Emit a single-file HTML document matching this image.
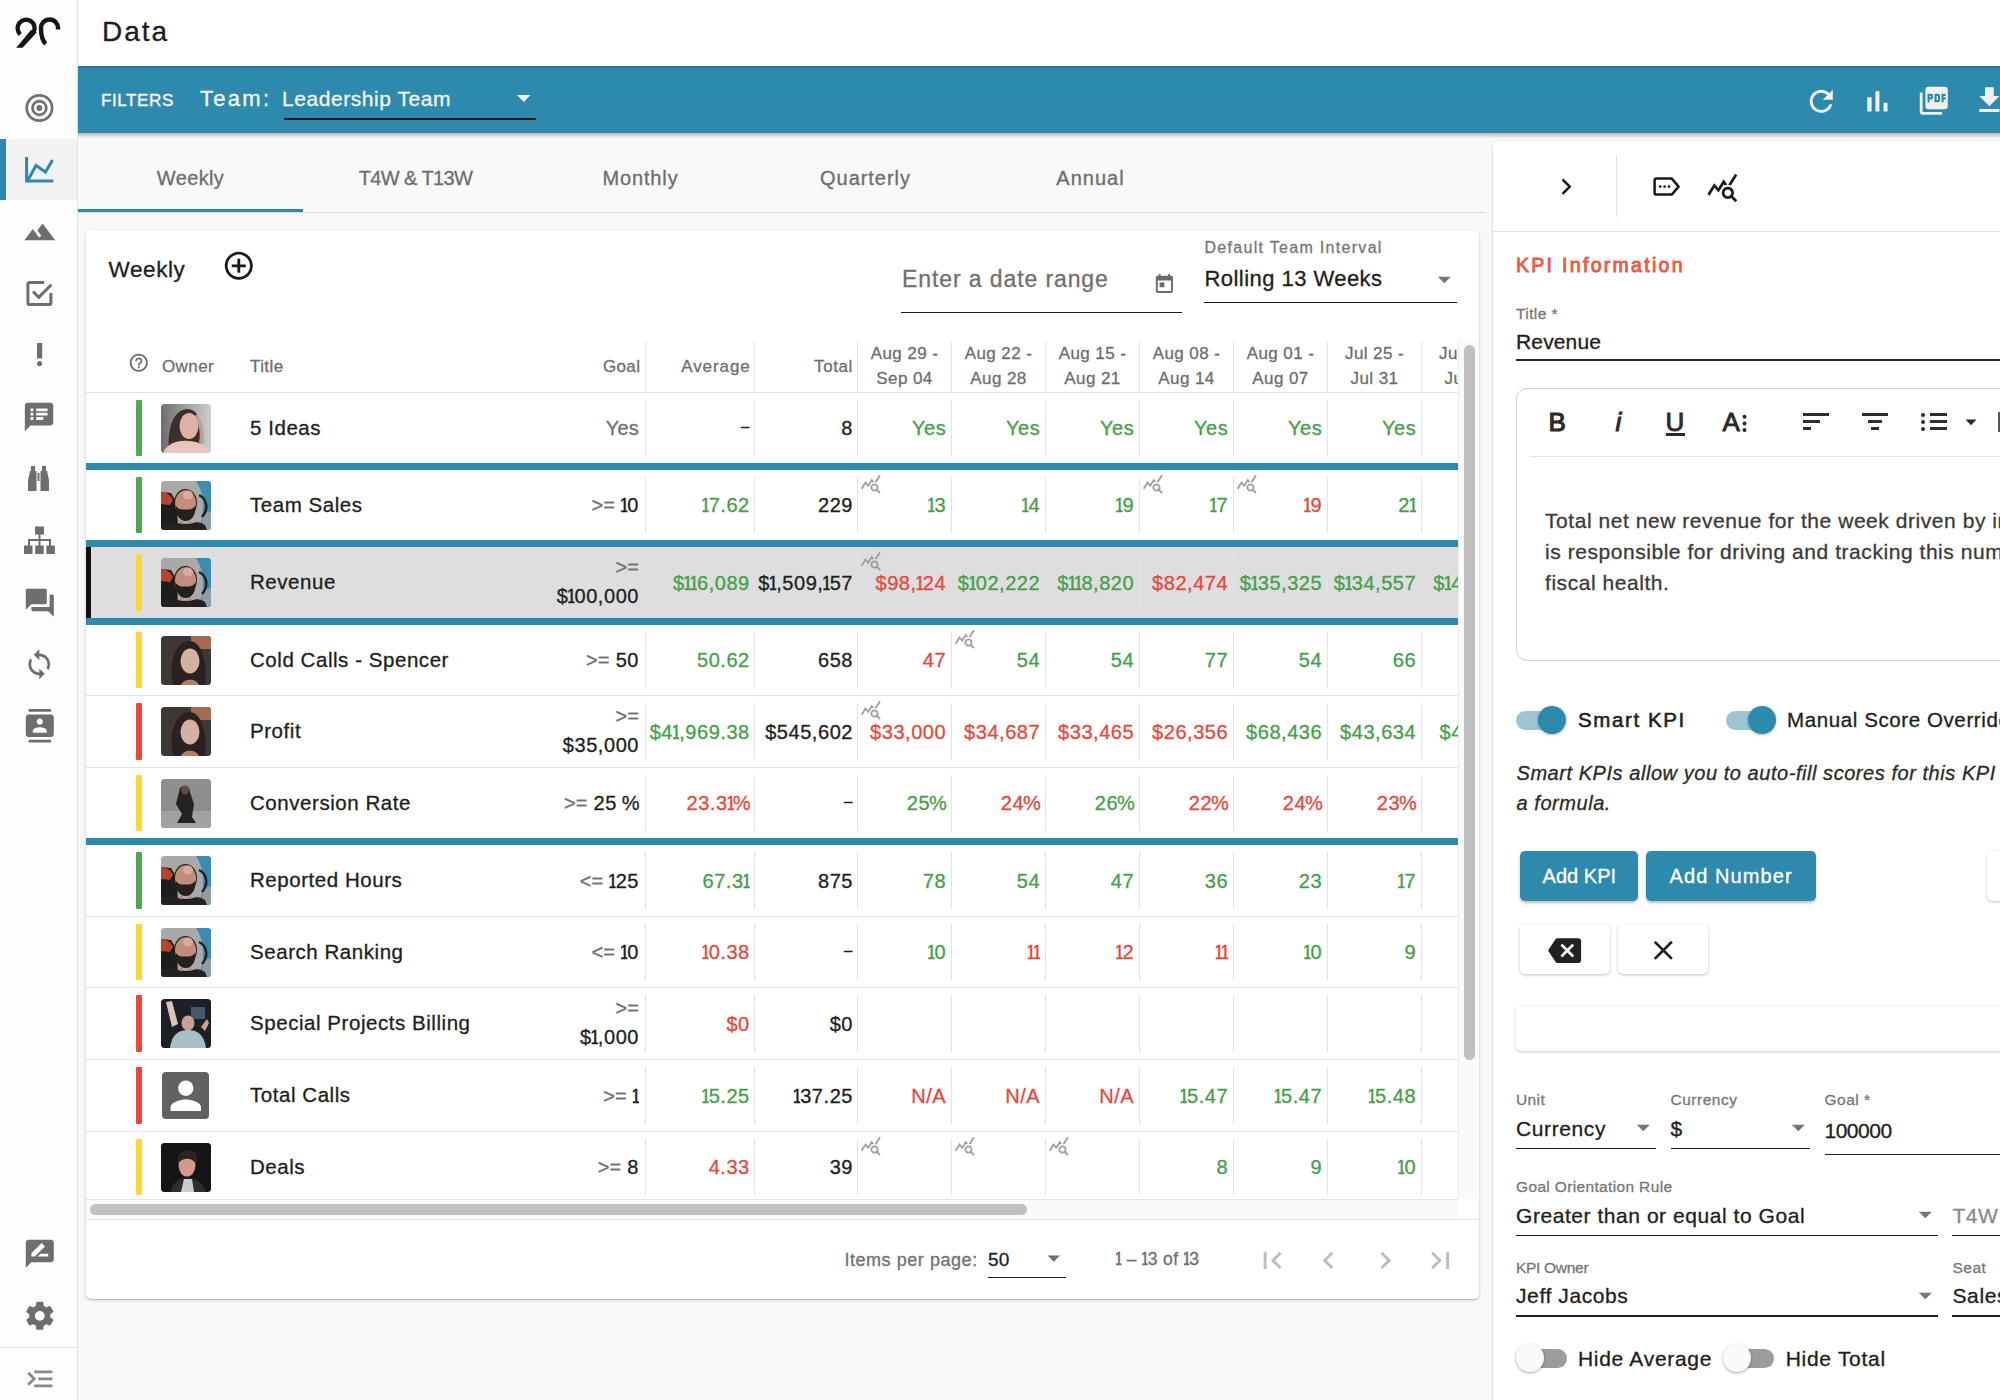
<!DOCTYPE html>
<html><head><meta charset="utf-8">
<style>
*{box-sizing:border-box}
html,body{margin:0;padding:0}
body{width:2000px;height:1400px;position:relative;overflow:hidden;font-family:"Liberation Sans",sans-serif;background:#f8f8f8;color:#212121}
.a{position:absolute}
svg.i{position:absolute;display:block;overflow:visible}
.t{position:absolute;white-space:nowrap;line-height:1;-webkit-text-stroke:0.3px currentColor}
.clip{position:absolute;overflow:hidden}
</style></head><body>
<div class="a" style="left:0px;top:0px;width:77px;height:1400px;background:#fdfdfd;"></div>
<div class="a" style="left:77px;top:0px;width:1px;height:1400px;background:#e2e2e2;"></div>
<svg class="i" style="left:0;top:0" width="78" height="66" viewBox="0 0 78 66"><g fill="none" stroke="#161616" stroke-width="4.4"><path d="M20.3 34.4 A8.5 8.5 0 1 1 33.8 31.8"/><path d="M45.8 43.8 C42 40.5 41 36 41 28 A8.5 8.5 0 0 1 58 28 L58 29.5"/></g><path d="M31.2 29.8 L36.7 32.4 L22.6 47.7 L16.2 47.7 Z" fill="#161616"/></svg>
<svg class="i" style="left:0;top:80" width="78" height="56" viewBox="0 80 78 56"><g fill="none" stroke="#707070" stroke-width="2.7"><circle cx="39.4" cy="108" r="12.7"/><circle cx="39.4" cy="108" r="6.9"/></g><circle cx="39.4" cy="108" r="2.9" fill="#707070"/></svg>
<div class="a" style="left:0px;top:139px;width:77px;height:61px;background:#f2f2f2;"></div>
<div class="a" style="left:0px;top:139px;width:6px;height:61px;background:#2e8aad;"></div>
<svg class="i" style="left:0;top:139px" width="78" height="61" viewBox="0 139 78 61"><g fill="none" stroke="#2e8aad" stroke-width="3"><path d="M26.6 157 V181.1 H53.3"/><path d="M28 180 L36 165.5 L45.5 172 L52.5 160"/></g></svg>
<svg class="i" style="left:22.60px;top:215.20px" width="33.60" height="33.60" viewBox="0 0 24 24"><path fill="#6e6e6e" d="M14 6l-3.75 5 2.85 3.8-1.6 1.2C9.81 13.75 7 10 7 10l-6 8h22L14 6z"/></svg>
<svg class="i" style="left:0;top:270px" width="78" height="50" viewBox="0 270 78 50"><g fill="none" stroke="#6e6e6e" stroke-width="3"><path d="M44 282.5 H29.5 Q27.9 282.5 27.9 284.1 V302.9 Q27.9 304.5 29.5 304.5 H49.3 Q50.9 304.5 50.9 302.9 V293"/><path d="M33 291.5 L38.8 297.3 L51.3 284.8"/></g></svg>
<svg class="i" style="left:23.80px;top:339.40px" width="31.20" height="31.20" viewBox="0 0 24 24"><path fill="#6e6e6e" d="M10 3h4v12h-4z M12 17a2 2 0 1 0 0.001 0z"/></svg>
<svg class="i" style="left:22.36px;top:399.96px" width="34.08" height="34.08" viewBox="0 0 24 24"><path fill="#6e6e6e" d="M20 2H4c-1.1 0-1.99.9-1.99 2L2 22l4-4h14c1.1 0 2-.9 2-2V4c0-1.1-.9-2-2-2zM8 14H6v-2h2v2zm0-3H6V9h2v2zm0-3H6V6h2v2zm7 6h-5v-2h5v2zm3-3h-8V9h8v2zm0-3h-8V6h8v2z"/></svg>
<svg class="i" style="left:0;top:460px" width="78" height="36" viewBox="0 460 78 36"><g fill="#6e6e6e"><rect x="31" y="466" width="4" height="5"/><rect x="42" y="466" width="4" height="5"/><path d="M30 471 H36.5 V491 H28 V480 Z"/><path d="M47 471 H40.5 V491 H49 V480 Z"/><rect x="37.5" y="473" width="2" height="8"/></g></svg>
<svg class="i" style="left:0;top:520px" width="78" height="40" viewBox="0 520 78 40"><g fill="#6e6e6e"><rect x="35" y="526.5" width="9" height="8"/><rect x="38.5" y="534" width="2" height="6"/><rect x="28" y="539" width="23" height="2"/><rect x="28" y="539" width="2" height="7"/><rect x="49" y="539" width="2" height="7"/><rect x="38.5" y="539" width="2" height="7"/><rect x="24" y="545.5" width="8.5" height="8.5"/><rect x="35.2" y="545.5" width="8.5" height="8.5"/><rect x="46.4" y="545.5" width="8.5" height="8.5"/></g></svg>
<svg class="i" style="left:22.60px;top:585.70px" width="33.60" height="33.60" viewBox="0 0 24 24"><path fill="#6e6e6e" d="M21 6h-2v9H6v2c0 .55.45 1 1 1h11l4 4V7c0-.55-.45-1-1-1zm-4 6V3c0-.55-.45-1-1-1H3c-.55 0-1 .45-1 1v14l4-4h10c.55 0 1-.45 1-1z"/></svg>
<svg class="i" style="left:23.08px;top:647.68px" width="32.64" height="32.64" viewBox="0 0 24 24"><path fill="#6e6e6e" d="M12 4V1L8 5l4 4V6c3.31 0 6 2.69 6 6 0 1.01-.25 1.97-.7 2.8l1.46 1.46C19.54 15.03 20 13.57 20 12c0-4.42-3.58-8-8-8zm0 14c-3.31 0-6-2.69-6-6 0-1.01.25-1.97.7-2.8L5.24 7.74C4.46 8.97 4 10.43 4 12c0 4.42 3.58 8 8 8v3l4-4-4-4v3z"/></svg>
<svg class="i" style="left:22.60px;top:709.20px" width="33.60" height="33.60" viewBox="0 0 24 24"><path fill="#6e6e6e" d="M20 0H4v2h16V0zM4 24h16v-2H4v2zM20 4H4c-1.1 0-2 .9-2 2v12c0 1.1.9 2 2 2h16c1.1 0 2-.9 2-2V6c0-1.1-.9-2-2-2zm-8 2.75c1.24 0 2.25 1.01 2.25 2.25s-1.01 2.25-2.25 2.25S9.75 10.24 9.75 9 10.76 6.75 12 6.75zM17 17H7v-1.5c0-1.67 3.33-2.5 5-2.5s5 .83 5 2.5V17z"/></svg>
<svg class="i" style="left:22.60px;top:1237.20px" width="33.60" height="33.60" viewBox="0 0 24 24"><path fill="#6e6e6e" d="M20 2H4c-1.1 0-1.99.9-1.99 2L2 22l4-4h14c1.1 0 2-.9 2-2V4c0-1.1-.9-2-2-2zM6 14v-2.47l6.88-6.88c.2-.2.51-.2.71 0l1.77 1.77c.2.2.2.51 0 .71L8.47 14H6zm12 0h-7.5l2-2H18v2z"/></svg>
<svg class="i" style="left:22.60px;top:1299.20px" width="33.60" height="33.60" viewBox="0 0 24 24"><path fill="#6e6e6e" d="M19.43 12.98c.04-.32.07-.64.07-.98s-.03-.66-.07-.98l2.11-1.65c.19-.15.24-.42.12-.64l-2-3.46c-.12-.22-.39-.3-.61-.22l-2.49 1c-.52-.4-1.08-.73-1.690-.98l-.38-2.65C14.46 2.18 14.25 2 14 2h-4c-.25 0-.46.18-.49.42l-.38 2.65c-.61.25-1.17.59-1.69.98l-2.49-1c-.23-.09-.49 0-.61.22l-2 3.46c-.13.22-.07.49.12.64l2.11 1.65c-.04.32-.07.65-.07.98s.03.66.07.98l-2.11 1.65c-.19.15-.24.42-.12.64l2 3.46c.12.22.39.3.61.22l2.49-1c.52.4 1.08.73 1.69.98l.38 2.65c.03.24.24.42.49.42h4c.25 0 .46-.18.49-.42l.38-2.65c.61-.25 1.17-.59 1.69-.98l2.49 1c.23.09.49 0 .61-.22l2-3.46c.12-.22.07-.49-.12-.64l-2.11-1.65zM12 15.5c-1.93 0-3.5-1.570-3.5-3.5s1.57-3.5 3.5-3.5 3.5 1.57 3.5 3.5-1.57 3.5-3.5 3.5z"/></svg>
<div class="a" style="left:0px;top:1347px;width:77px;height:1px;background:#e0e0e0;"></div>
<svg class="i" style="left:22.60px;top:1361.70px" width="33.60" height="33.60" viewBox="0 0 24 24"><path fill="#8a8a8a" transform="translate(24,0) scale(-1,1)" d="M3 18h13v-2H3v2zm0-5h10v-2H3v2zm0-7v2h13V6H3zm18 9.59L17.42 12 21 8.41 19.59 7l-5 5 5 5L21 15.59z"/></svg>
<div class="a" style="left:78px;top:0px;width:1922px;height:66px;background:#ffffff;"></div>
<div class="t" style="top:18.30px;font-size:28px;color:#1c1c1c;letter-spacing:2.0px;left:102px;">Data</div>
<div class="a" style="left:78px;top:66px;width:1922px;height:67px;background:#2e8aad"></div>
<div class="a" style="left:78px;top:66px;width:1922px;height:2px;background:#2a7696;"></div>
<div class="t" style="top:91.61px;font-size:17px;color:#f2f2f2;letter-spacing:0.6px;left:101px;-webkit-text-stroke:0.45px #f2f2f2;">FILTERS</div>
<div class="t" style="top:87.88px;font-size:22px;color:#f4f4f4;letter-spacing:2.3px;left:200px;">Team:</div>
<div class="t" style="top:88.22px;font-size:21px;color:#f4f4f4;letter-spacing:0.55px;left:282px;">Leadership Team</div>
<div class="a" style="left:283.5px;top:118px;width:252.5px;height:1.5px;background:#111;"></div>
<svg class="i" style="left:516px;top:94px" width="16" height="9" viewBox="0 0 16 9"><path d="M1 1 H14.5 L7.75 8 Z" fill="#f4f4f4"/></svg>
<svg class="i" style="left:1804.22px;top:83.72px" width="34.56" height="34.56" viewBox="0 0 24 24"><path fill="#f0f0f0" d="M17.65 6.35C16.2 4.9 14.21 4 12 4c-4.42 0-7.99 3.58-7.99 8s3.57 8 7.99 8c3.73 0 6.84-2.55 7.730-6h-2.08c-.82 2.33-3.04 4-5.65 4-3.31 0-6-2.69-6-6s2.69-6 6-6c1.66 0 3.14.69 4.22 1.78L13 11h7V4l-2.35 2.35z"/></svg>
<svg class="i" style="left:1860.30px;top:83.60px" width="34.80" height="34.80" viewBox="0 0 24 24"><path fill="#f0f0f0" d="M5 9.2h3V19H5zM10.6 5h2.8v14h-2.8zm5.6 8H19v6h-2.8z"/></svg>
<svg class="i" style="left:1917.00px;top:84.20px" width="33.60" height="33.60" viewBox="0 0 24 24"><path fill="#f0f0f0" d="M20 2H8c-1.1 0-2 .9-2 2v12c0 1.1.9 2 2 2h12c1.1 0 2-.9 2-2V4c0-1.1-.9-2-2-2zm-8.5 7.5c0 .83-.67 1.5-1.5 1.5H9v2H7.5V7H10c.83 0 1.5.67 1.5 1.5v1zm5 2c0 .83-.67 1.5-1.5 1.5h-2.5V7H15c.83 0 1.5.67 1.5 1.5v3zm4-3H19v1h1.5V11H19v2h-1.5V7h3v1.5zM9 9.5h1v-1H9v1zM4 6H2v14c0 1.1.9 2 2 2h14v-2H4V6zm10 5.5h1v-3h-1v3z"/></svg>
<svg class="i" style="left:1972.10px;top:83.10px" width="34.80" height="34.80" viewBox="0 0 24 24"><path fill="#f0f0f0" d="M19 9h-4V3H9v6H5l7 7 7-7zM5 18v2h14v-2H5z"/></svg>
<div class="a" style="left:78px;top:133px;width:1415px;height:79px;background:#f9f9f9;"></div>
<div class="a" style="left:78px;top:212px;width:1408px;height:1px;background:#dcdcdc;"></div>
<div class="t" style="top:168.07px;font-size:20px;color:#6d6d6d;letter-spacing:0.35px;left:-109.5px;width:600px;text-align:center;">Weekly</div>
<div class="t" style="top:168.07px;font-size:20px;color:#6d6d6d;letter-spacing:-0.6px;left:115.5px;width:600px;text-align:center;">T4W &amp; T13W</div>
<div class="t" style="top:168.07px;font-size:20px;color:#6d6d6d;letter-spacing:0.85px;left:340.5px;width:600px;text-align:center;">Monthly</div>
<div class="t" style="top:168.07px;font-size:20px;color:#6d6d6d;letter-spacing:0.95px;left:565.5px;width:600px;text-align:center;">Quarterly</div>
<div class="t" style="top:168.07px;font-size:20px;color:#6d6d6d;letter-spacing:1.0px;left:790.5px;width:600px;text-align:center;">Annual</div>
<div class="a" style="left:78px;top:208.5px;width:225px;height:3px;background:#2e8aad;"></div>
<div class="a" style="left:78px;top:133px;width:1922px;height:5px;background:linear-gradient(rgba(0,0,0,.26),rgba(0,0,0,.02));"></div>
<div class="a" style="left:86px;top:230px;width:1393px;height:1069px;background:#fff;border-radius:5px;box-shadow:0 1px 3px rgba(0,0,0,.2),0 1px 1px rgba(0,0,0,.12)"></div>
<div class="t" style="top:258.75px;font-size:22.5px;color:#1e1e1e;letter-spacing:0.6px;left:108.5px;">Weekly</div>
<svg class="i" style="left:221.70px;top:248.70px" width="33.60" height="33.60" viewBox="0 0 24 24"><path fill="#1a1a1a" d="M13 7h-2v4H7v2h4v4h2v-4h4v-2h-4V7zm-1-5C6.48 2 2 6.48 2 12s4.48 10 10 10 10-4.48 10-10S17.52 2 12 2zm0 18c-4.41 0-8-3.59-8-8s3.59-8 8-8 8 3.59 8 8-3.59 8-8 8z"/></svg>
<div class="t" style="top:268.03px;font-size:23px;color:#707070;letter-spacing:0.9px;left:902px;">Enter a date range</div>
<svg class="i" style="left:1153.10px;top:272.60px" width="22.80" height="22.80" viewBox="0 0 24 24"><path fill="#6a6a6a" d="M19 3h-1V1h-2v2H8V1H6v2H5c-1.11 0-1.99.9-1.99 2L3 19c0 1.1.89 2 2 2h14c1.1 0 2-.9 2-2V5c0-1.1-.9-2-2-2zm0 16H5V8h14v11zM7 10h5v5H7z"/></svg>
<div class="a" style="left:901px;top:311.5px;width:281px;height:1.5px;background:#1a1a1a;"></div>
<div class="t" style="top:239.66px;font-size:16px;color:#777777;letter-spacing:1.3px;left:1204.5px;">Default Team Interval</div>
<div class="t" style="top:268.38px;font-size:22px;color:#1e1e1e;letter-spacing:0.45px;left:1204.5px;">Rolling 13 Weeks</div>
<svg class="i" style="left:1437px;top:276px" width="15" height="8" viewBox="0 0 15 8"><path d="M0.8 0.8 H13.8 L7.3 7.3 Z" fill="#757575"/></svg>
<div class="a" style="left:1204px;top:301.5px;width:253px;height:1.5px;background:#1a1a1a;"></div>
<div class="clip" style="left:86px;top:340px;width:1372px;height:859px"><div class="a" style="left:-86px;top:-340px;width:2000px;height:1400px">
<div class="t" style="top:357.61px;font-size:17px;color:#6e6e6e;letter-spacing:0.4px;left:162px;">Owner</div>
<div class="t" style="top:357.61px;font-size:17px;color:#6e6e6e;letter-spacing:0.4px;left:250px;">Title</div>
<div class="t" style="top:357.61px;font-size:17px;color:#6e6e6e;letter-spacing:0.4px;left:40.39999999999998px;width:600px;text-align:right;">Goal</div>
<div class="t" style="top:357.61px;font-size:17px;color:#6e6e6e;letter-spacing:0.9px;left:150.60000000000002px;width:600px;text-align:right;">Average</div>
<div class="t" style="top:357.61px;font-size:17px;color:#6e6e6e;letter-spacing:0.6px;left:253px;width:600px;text-align:right;">Total</div>
<svg class="i" style="left:128.20px;top:352.20px" width="21.60" height="21.60" viewBox="0 0 24 24"><path fill="#6a6a6a" d="M11 18h2v-2h-2v2zm1-16C6.48 2 2 6.48 2 12s4.48 10 10 10 10-4.480 10-10S17.52 2 12 2zm0 18c-4.41 0-8-3.59-8-8s3.59-8 8-8 8 3.59 8 8-3.59 8-8 8zm0-14c-2.21 0-4 1.79-4 4h2c0-1.1.9-2 2-2s2 .9 2 2c0 2-3 1.75-3 5h2c0-2.25 3-2.5 3-5 0-2.21-1.79-4-4-4z"/></svg>
<div class="t" style="top:344.91px;font-size:17px;color:#6e6e6e;letter-spacing:0.4px;left:604.5px;width:600px;text-align:center;">Aug 29 -</div>
<div class="t" style="top:370.01px;font-size:17px;color:#6e6e6e;letter-spacing:0.4px;left:604.5px;width:600px;text-align:center;">Sep 04</div>
<div class="t" style="top:344.91px;font-size:17px;color:#6e6e6e;letter-spacing:0.4px;left:698.5px;width:600px;text-align:center;">Aug 22 -</div>
<div class="t" style="top:370.01px;font-size:17px;color:#6e6e6e;letter-spacing:0.4px;left:698.5px;width:600px;text-align:center;">Aug 28</div>
<div class="t" style="top:344.91px;font-size:17px;color:#6e6e6e;letter-spacing:0.4px;left:792.5px;width:600px;text-align:center;">Aug 15 -</div>
<div class="t" style="top:370.01px;font-size:17px;color:#6e6e6e;letter-spacing:0.4px;left:792.5px;width:600px;text-align:center;">Aug 21</div>
<div class="t" style="top:344.91px;font-size:17px;color:#6e6e6e;letter-spacing:0.4px;left:886.5px;width:600px;text-align:center;">Aug 08 -</div>
<div class="t" style="top:370.01px;font-size:17px;color:#6e6e6e;letter-spacing:0.4px;left:886.5px;width:600px;text-align:center;">Aug 14</div>
<div class="t" style="top:344.91px;font-size:17px;color:#6e6e6e;letter-spacing:0.4px;left:980.5px;width:600px;text-align:center;">Aug 01 -</div>
<div class="t" style="top:370.01px;font-size:17px;color:#6e6e6e;letter-spacing:0.4px;left:980.5px;width:600px;text-align:center;">Aug 07</div>
<div class="t" style="top:344.91px;font-size:17px;color:#6e6e6e;letter-spacing:0.4px;left:1074.5px;width:600px;text-align:center;">Jul 25 -</div>
<div class="t" style="top:370.01px;font-size:17px;color:#6e6e6e;letter-spacing:0.4px;left:1074.5px;width:600px;text-align:center;">Jul 31</div>
<div class="t" style="top:344.91px;font-size:17px;color:#6e6e6e;letter-spacing:0.4px;left:1168.5px;width:600px;text-align:center;">Jul 18 -</div>
<div class="t" style="top:370.01px;font-size:17px;color:#6e6e6e;letter-spacing:0.4px;left:1168.5px;width:600px;text-align:center;">Jul 24</div>
<div class="a" style="left:644.5px;top:341.5px;width:1px;height:51px;background:#e3e3e3;"></div>
<div class="a" style="left:754px;top:341.5px;width:1px;height:51px;background:#e3e3e3;"></div>
<div class="a" style="left:857px;top:341.5px;width:1px;height:51px;background:#e3e3e3;"></div>
<div class="a" style="left:951px;top:341.5px;width:1px;height:51px;background:#e3e3e3;"></div>
<div class="a" style="left:1045px;top:341.5px;width:1px;height:51px;background:#e3e3e3;"></div>
<div class="a" style="left:1139px;top:341.5px;width:1px;height:51px;background:#e3e3e3;"></div>
<div class="a" style="left:1233px;top:341.5px;width:1px;height:51px;background:#e3e3e3;"></div>
<div class="a" style="left:1327px;top:341.5px;width:1px;height:51px;background:#e3e3e3;"></div>
<div class="a" style="left:1421px;top:341.5px;width:1px;height:51px;background:#e3e3e3;"></div>
<div class="a" style="left:86px;top:392px;width:1372px;height:1px;background:#e0e0e0;"></div>
<div class="a" style="left:136px;top:400px;width:6px;height:56px;background:#4caa50;border-radius:1px"></div>
<svg class="i" style="left:161px;top:404px;border-radius:4px" width="50" height="49" viewBox="0 0 50 49"><clipPath id="c161404"><rect width="50" height="49" rx="3.5"/></clipPath><g clip-path="url(#c161404)"><defs><linearGradient id="gw1" x1="0" x2="1"><stop offset="0" stop-color="#6e6e6e"/><stop offset="1" stop-color="#cfcfcf"/></linearGradient></defs><rect width="50" height="49" fill="url(#gw1)"/><path d="M8 49 C6 30 10 6 26 5 C36 5 40 14 40 30 L36 49Z" fill="#3b302c"/><ellipse cx="28" cy="22" rx="9.5" ry="13" fill="#dcb2a4"/><path d="M2 49 C6 40 16 36 27 37 C38 37 46 42 49 49Z" fill="#e9c6bb"/><path d="M36 10 C42 18 44 30 42 40 L38 40 C40 30 38 20 34 12Z" fill="#b9a090"/></g></svg>
<div class="t" style="top:417.75px;font-size:20.5px;color:#1e1e1e;letter-spacing:0.55px;left:250px;">5 Ideas</div>
<div class="a" style="left:644.5px;top:400px;width:1px;height:56px;background:#e3e3e3;"></div>
<div class="a" style="left:754px;top:400px;width:1px;height:56px;background:#e3e3e3;"></div>
<div class="a" style="left:857px;top:400px;width:1px;height:56px;background:#e3e3e3;"></div>
<div class="a" style="left:951px;top:400px;width:1px;height:56px;background:#e3e3e3;"></div>
<div class="a" style="left:1045px;top:400px;width:1px;height:56px;background:#e3e3e3;"></div>
<div class="a" style="left:1139px;top:400px;width:1px;height:56px;background:#e3e3e3;"></div>
<div class="a" style="left:1233px;top:400px;width:1px;height:56px;background:#e3e3e3;"></div>
<div class="a" style="left:1327px;top:400px;width:1px;height:56px;background:#e3e3e3;"></div>
<div class="a" style="left:1421px;top:400px;width:1px;height:56px;background:#e3e3e3;"></div>
<div class="t" style="top:418.17px;font-size:20px;color:#707070;letter-spacing:0.2px;left:39px;width:600px;text-align:right;">Yes</div>
<div class="t" style="top:418.30px;font-size:15px;color:#212121;letter-spacing:0.55px;left:149.79999999999995px;width:600px;text-align:right;">&ndash;</div>
<div class="t" style="top:418.17px;font-size:20px;color:#1e1e1e;letter-spacing:0.55px;left:253px;width:600px;text-align:right;">8</div>
<div class="t" style="top:418.17px;font-size:20px;color:#45a04a;letter-spacing:0.55px;left:346.20000000000005px;width:600px;text-align:right;">Yes</div>
<div class="t" style="top:418.17px;font-size:20px;color:#45a04a;letter-spacing:0.55px;left:440.20000000000005px;width:600px;text-align:right;">Yes</div>
<div class="t" style="top:418.17px;font-size:20px;color:#45a04a;letter-spacing:0.55px;left:534.2px;width:600px;text-align:right;">Yes</div>
<div class="t" style="top:418.17px;font-size:20px;color:#45a04a;letter-spacing:0.55px;left:628.2px;width:600px;text-align:right;">Yes</div>
<div class="t" style="top:418.17px;font-size:20px;color:#45a04a;letter-spacing:0.55px;left:722.2px;width:600px;text-align:right;">Yes</div>
<div class="t" style="top:418.17px;font-size:20px;color:#45a04a;letter-spacing:0.55px;left:816.2px;width:600px;text-align:right;">Yes</div>
<div class="a" style="left:86px;top:463px;width:1372px;height:7px;background:#2e8aad;"></div>
<div class="a" style="left:136px;top:477px;width:6px;height:56px;background:#4caa50;border-radius:1px"></div>
<svg class="i" style="left:161px;top:481px;border-radius:4px" width="50" height="49" viewBox="0 0 50 49"><clipPath id="c161481"><rect width="50" height="49" rx="3.5"/></clipPath><g clip-path="url(#c161481)"><rect width="50" height="49" fill="#a9a9a9"/><path d="M0 11 L10 12 L16 22 L17 49 L0 49Z" fill="#1d1d1d"/><path d="M0 11 C5 11 10 14 12 19 L9 24 L0 23Z" fill="#b8432e"/><path d="M35 0 L50 0 L50 49 L38 49 C44 30 44 14 35 0Z" fill="#3a8db0"/><path d="M50 30 L50 49 L40 49 L42 32Z" fill="#8d9ea6"/><path d="M38 14 C46 18 48 28 41 36" stroke="#1e1e1e" stroke-width="2.4" fill="none"/><ellipse cx="24.5" cy="22" rx="11.5" ry="14" fill="#2a2424"/><ellipse cx="24.5" cy="22.5" rx="10.5" ry="13.2" fill="#c38d7b"/><ellipse cx="27" cy="14" rx="5" ry="4.5" fill="#d8ab9c"/><path d="M14.5 24 C14 34 19 40 24.5 40 C31 40 35 34 34.5 24 C32 29 28 28.5 24.5 28.5 C21 28.5 17 29 14.5 24Z" fill="#252020"/><path d="M19 38 C20 44 29 44 30 38 L30 44 L19 44Z" fill="#b47f6c"/><path d="M0 49 L0 42 C10 40 16 41 20 43 L29 43 C36 40 40 41 44 44 L46 49Z" fill="#222"/></g></svg>
<div class="t" style="top:494.75px;font-size:20.5px;color:#1e1e1e;letter-spacing:0.55px;left:250px;">Team Sales</div>
<div class="a" style="left:644.5px;top:477px;width:1px;height:56px;background:#e3e3e3;"></div>
<div class="a" style="left:754px;top:477px;width:1px;height:56px;background:#e3e3e3;"></div>
<div class="a" style="left:857px;top:477px;width:1px;height:56px;background:#e3e3e3;"></div>
<div class="a" style="left:951px;top:477px;width:1px;height:56px;background:#e3e3e3;"></div>
<div class="a" style="left:1045px;top:477px;width:1px;height:56px;background:#e3e3e3;"></div>
<div class="a" style="left:1139px;top:477px;width:1px;height:56px;background:#e3e3e3;"></div>
<div class="a" style="left:1233px;top:477px;width:1px;height:56px;background:#e3e3e3;"></div>
<div class="a" style="left:1327px;top:477px;width:1px;height:56px;background:#e3e3e3;"></div>
<div class="a" style="left:1421px;top:477px;width:1px;height:56px;background:#e3e3e3;"></div>
<div class="t" style="top:495.17px;font-size:20px;color:#1e1e1e;letter-spacing:0.55px;left:39px;width:600px;text-align:right;"><span style="color:#707070;letter-spacing:0.1px">&gt;=</span> <span style="clip-path:inset(0 3.0px 0 2.5px);margin-left:-2.5px;margin-right:-3.0px">1</span>0</div>
<div class="t" style="top:495.17px;font-size:20px;color:#45a04a;letter-spacing:0.55px;left:149.79999999999995px;width:600px;text-align:right;"><span style="clip-path:inset(0 3.0px 0 2.5px);margin-left:-2.5px;margin-right:-3.0px">1</span>7.62</div>
<div class="t" style="top:495.17px;font-size:20px;color:#1e1e1e;letter-spacing:0.55px;left:253px;width:600px;text-align:right;">229</div>
<div class="t" style="top:495.17px;font-size:20px;color:#45a04a;letter-spacing:0.55px;left:346.20000000000005px;width:600px;text-align:right;"><span style="clip-path:inset(0 3.0px 0 2.5px);margin-left:-2.5px;margin-right:-3.0px">1</span>3</div>
<svg class="i" style="left:859.60px;top:472.60px" width="21.6" height="21.6" viewBox="0 0 24 24"><path fill="#9e9e9e" d="M19.88 18.47c.44-.7.7-1.51.7-2.39 0-2.49-2.01-4.5-4.5-4.5s-4.5 2.01-4.5 4.5 2.01 4.5 4.49 4.5c.88 0 1.7-.26 2.39-.7L21.58 23 23 21.58l-3.12-3.11zm-3.8.11c-1.38 0-2.5-1.12-2.5-2.5s1.12-2.5 2.5-2.5 2.5 1.12 2.5 2.5-1.12 2.5-2.5 2.5zm-.36-8.5c-.74.02-1.450.18-2.1.45l-.55-.83-3.8 6.18-3.01-3.52-3.63 5.81L1 17l5-8 3 3.5L13 6l2.72 4.080zm2.59.5c-.64-.28-1.33-.45-2.05-.49L21.38 2 23 3.18l-4.69 7.4z"/></svg>
<div class="t" style="top:495.17px;font-size:20px;color:#45a04a;letter-spacing:0.55px;left:440.20000000000005px;width:600px;text-align:right;"><span style="clip-path:inset(0 3.0px 0 2.5px);margin-left:-2.5px;margin-right:-3.0px">1</span>4</div>
<div class="t" style="top:495.17px;font-size:20px;color:#45a04a;letter-spacing:0.55px;left:534.2px;width:600px;text-align:right;"><span style="clip-path:inset(0 3.0px 0 2.5px);margin-left:-2.5px;margin-right:-3.0px">1</span>9</div>
<div class="t" style="top:495.17px;font-size:20px;color:#45a04a;letter-spacing:0.55px;left:628.2px;width:600px;text-align:right;"><span style="clip-path:inset(0 3.0px 0 2.5px);margin-left:-2.5px;margin-right:-3.0px">1</span>7</div>
<svg class="i" style="left:1141.60px;top:472.60px" width="21.6" height="21.6" viewBox="0 0 24 24"><path fill="#9e9e9e" d="M19.88 18.47c.44-.7.7-1.51.7-2.39 0-2.49-2.01-4.5-4.5-4.5s-4.5 2.01-4.5 4.5 2.01 4.5 4.49 4.5c.88 0 1.7-.26 2.39-.7L21.58 23 23 21.58l-3.12-3.11zm-3.8.11c-1.38 0-2.5-1.12-2.5-2.5s1.12-2.5 2.5-2.5 2.5 1.12 2.5 2.5-1.12 2.5-2.5 2.5zm-.36-8.5c-.74.02-1.450.18-2.1.45l-.55-.83-3.8 6.18-3.01-3.52-3.63 5.81L1 17l5-8 3 3.5L13 6l2.72 4.080zm2.59.5c-.64-.28-1.33-.45-2.05-.49L21.38 2 23 3.18l-4.69 7.4z"/></svg>
<div class="t" style="top:495.17px;font-size:20px;color:#e9473a;letter-spacing:0.55px;left:722.2px;width:600px;text-align:right;"><span style="clip-path:inset(0 3.0px 0 2.5px);margin-left:-2.5px;margin-right:-3.0px">1</span>9</div>
<svg class="i" style="left:1235.60px;top:472.60px" width="21.6" height="21.6" viewBox="0 0 24 24"><path fill="#9e9e9e" d="M19.88 18.47c.44-.7.7-1.51.7-2.39 0-2.49-2.01-4.5-4.5-4.5s-4.5 2.01-4.5 4.5 2.01 4.5 4.49 4.5c.88 0 1.7-.26 2.39-.7L21.58 23 23 21.58l-3.12-3.11zm-3.8.11c-1.38 0-2.5-1.12-2.5-2.5s1.12-2.5 2.5-2.5 2.5 1.12 2.5 2.5-1.12 2.5-2.5 2.5zm-.36-8.5c-.74.02-1.450.18-2.1.45l-.55-.83-3.8 6.18-3.01-3.52-3.63 5.81L1 17l5-8 3 3.5L13 6l2.72 4.080zm2.59.5c-.64-.28-1.33-.45-2.05-.49L21.38 2 23 3.18l-4.69 7.4z"/></svg>
<div class="t" style="top:495.17px;font-size:20px;color:#45a04a;letter-spacing:0.55px;left:816.2px;width:600px;text-align:right;">2<span style="clip-path:inset(0 3.0px 0 2.5px);margin-left:-2.5px;margin-right:-3.0px">1</span></div>
<div class="a" style="left:86px;top:540px;width:1372px;height:7px;background:#2e8aad;"></div>
<div class="a" style="left:86px;top:547px;width:1372px;height:71px;background:#dedede;"></div>
<div class="a" style="left:86px;top:547px;width:5px;height:71px;background:#111111;"></div>
<div class="a" style="left:136px;top:554px;width:6px;height:57px;background:#fdd835;border-radius:1px"></div>
<svg class="i" style="left:161px;top:558px;border-radius:4px" width="50" height="49" viewBox="0 0 50 49"><clipPath id="c161558"><rect width="50" height="49" rx="3.5"/></clipPath><g clip-path="url(#c161558)"><rect width="50" height="49" fill="#a9a9a9"/><path d="M0 11 L10 12 L16 22 L17 49 L0 49Z" fill="#1d1d1d"/><path d="M0 11 C5 11 10 14 12 19 L9 24 L0 23Z" fill="#b8432e"/><path d="M35 0 L50 0 L50 49 L38 49 C44 30 44 14 35 0Z" fill="#3a8db0"/><path d="M50 30 L50 49 L40 49 L42 32Z" fill="#8d9ea6"/><path d="M38 14 C46 18 48 28 41 36" stroke="#1e1e1e" stroke-width="2.4" fill="none"/><ellipse cx="24.5" cy="22" rx="11.5" ry="14" fill="#2a2424"/><ellipse cx="24.5" cy="22.5" rx="10.5" ry="13.2" fill="#c38d7b"/><ellipse cx="27" cy="14" rx="5" ry="4.5" fill="#d8ab9c"/><path d="M14.5 24 C14 34 19 40 24.5 40 C31 40 35 34 34.5 24 C32 29 28 28.5 24.5 28.5 C21 28.5 17 29 14.5 24Z" fill="#252020"/><path d="M19 38 C20 44 29 44 30 38 L30 44 L19 44Z" fill="#b47f6c"/><path d="M0 49 L0 42 C10 40 16 41 20 43 L29 43 C36 40 40 41 44 44 L46 49Z" fill="#222"/></g></svg>
<div class="t" style="top:572.25px;font-size:20.5px;color:#1e1e1e;letter-spacing:0.55px;left:250px;">Revenue</div>
<div class="a" style="left:644.5px;top:554px;width:1px;height:57px;background:#e3e3e3;"></div>
<div class="a" style="left:754px;top:554px;width:1px;height:57px;background:#e3e3e3;"></div>
<div class="a" style="left:857px;top:554px;width:1px;height:57px;background:#e3e3e3;"></div>
<div class="a" style="left:951px;top:554px;width:1px;height:57px;background:#e3e3e3;"></div>
<div class="a" style="left:1045px;top:554px;width:1px;height:57px;background:#e3e3e3;"></div>
<div class="a" style="left:1139px;top:554px;width:1px;height:57px;background:#e3e3e3;"></div>
<div class="a" style="left:1233px;top:554px;width:1px;height:57px;background:#e3e3e3;"></div>
<div class="a" style="left:1327px;top:554px;width:1px;height:57px;background:#e3e3e3;"></div>
<div class="a" style="left:1421px;top:554px;width:1px;height:57px;background:#e3e3e3;"></div>
<div class="t" style="top:557.07px;font-size:20px;color:#707070;letter-spacing:0.1px;left:39px;width:600px;text-align:right;">&gt;=</div>
<div class="t" style="top:586.37px;font-size:20px;color:#1e1e1e;letter-spacing:0.55px;left:39px;width:600px;text-align:right;">$<span style="clip-path:inset(0 3.0px 0 2.5px);margin-left:-2.5px;margin-right:-3.0px">1</span>00,000</div>
<div class="t" style="top:572.67px;font-size:20px;color:#45a04a;letter-spacing:0.55px;left:149.79999999999995px;width:600px;text-align:right;">$<span style="clip-path:inset(0 3.0px 0 2.5px);margin-left:-2.5px;margin-right:-3.0px">1</span><span style="clip-path:inset(0 3.0px 0 2.5px);margin-left:-2.5px;margin-right:-3.0px">1</span>6,089</div>
<div class="t" style="top:572.67px;font-size:20px;color:#1e1e1e;letter-spacing:0.55px;left:253px;width:600px;text-align:right;">$<span style="clip-path:inset(0 3.0px 0 2.5px);margin-left:-2.5px;margin-right:-3.0px">1</span>,509,<span style="clip-path:inset(0 3.0px 0 2.5px);margin-left:-2.5px;margin-right:-3.0px">1</span>57</div>
<div class="t" style="top:572.67px;font-size:20px;color:#e9473a;letter-spacing:0.55px;left:346.20000000000005px;width:600px;text-align:right;">$98,<span style="clip-path:inset(0 3.0px 0 2.5px);margin-left:-2.5px;margin-right:-3.0px">1</span>24</div>
<svg class="i" style="left:859.60px;top:549.60px" width="21.6" height="21.6" viewBox="0 0 24 24"><path fill="#9e9e9e" d="M19.88 18.47c.44-.7.7-1.51.7-2.39 0-2.49-2.01-4.5-4.5-4.5s-4.5 2.01-4.5 4.5 2.01 4.5 4.49 4.5c.88 0 1.7-.26 2.39-.7L21.58 23 23 21.58l-3.12-3.11zm-3.8.11c-1.38 0-2.5-1.12-2.5-2.5s1.12-2.5 2.5-2.5 2.5 1.12 2.5 2.5-1.12 2.5-2.5 2.5zm-.36-8.5c-.74.02-1.450.18-2.1.45l-.55-.83-3.8 6.18-3.01-3.52-3.63 5.81L1 17l5-8 3 3.5L13 6l2.72 4.080zm2.59.5c-.64-.28-1.33-.45-2.05-.49L21.38 2 23 3.18l-4.69 7.4z"/></svg>
<div class="t" style="top:572.67px;font-size:20px;color:#45a04a;letter-spacing:0.55px;left:440.20000000000005px;width:600px;text-align:right;">$<span style="clip-path:inset(0 3.0px 0 2.5px);margin-left:-2.5px;margin-right:-3.0px">1</span>02,222</div>
<div class="t" style="top:572.67px;font-size:20px;color:#45a04a;letter-spacing:0.55px;left:534.2px;width:600px;text-align:right;">$<span style="clip-path:inset(0 3.0px 0 2.5px);margin-left:-2.5px;margin-right:-3.0px">1</span><span style="clip-path:inset(0 3.0px 0 2.5px);margin-left:-2.5px;margin-right:-3.0px">1</span>8,820</div>
<div class="t" style="top:572.67px;font-size:20px;color:#e9473a;letter-spacing:0.55px;left:628.2px;width:600px;text-align:right;">$82,474</div>
<div class="t" style="top:572.67px;font-size:20px;color:#45a04a;letter-spacing:0.55px;left:722.2px;width:600px;text-align:right;">$<span style="clip-path:inset(0 3.0px 0 2.5px);margin-left:-2.5px;margin-right:-3.0px">1</span>35,325</div>
<div class="t" style="top:572.67px;font-size:20px;color:#45a04a;letter-spacing:0.55px;left:816.2px;width:600px;text-align:right;">$<span style="clip-path:inset(0 3.0px 0 2.5px);margin-left:-2.5px;margin-right:-3.0px">1</span>34,557</div>
<div class="t" style="top:572.67px;font-size:20px;color:#45a04a;letter-spacing:0.55px;left:910.2px;width:600px;text-align:right;">$<span style="clip-path:inset(0 3.0px 0 2.5px);margin-left:-2.5px;margin-right:-3.0px">1</span>48,4<span style="clip-path:inset(0 3.0px 0 2.5px);margin-left:-2.5px;margin-right:-3.0px">1</span>0</div>
<div class="a" style="left:86px;top:618px;width:1372px;height:7px;background:#2e8aad;"></div>
<div class="a" style="left:136px;top:632px;width:6px;height:56px;background:#fdd835;border-radius:1px"></div>
<svg class="i" style="left:161px;top:636px;border-radius:4px" width="50" height="49" viewBox="0 0 50 49"><clipPath id="c161636"><rect width="50" height="49" rx="3.5"/></clipPath><g clip-path="url(#c161636)"><rect width="50" height="49" fill="#3e3735"/><rect x="30" width="20" height="13" fill="#a46b52"/><path d="M12 49 C8 32 12 6 28 5 C42 5 46 28 44 49Z" fill="#2a2220"/><ellipse cx="29" cy="25" rx="9.5" ry="12.5" fill="#d8b0a2"/><path d="M20 49 C23 42 35 42 38 49Z" fill="#b47e66"/></g></svg>
<div class="t" style="top:649.75px;font-size:20.5px;color:#1e1e1e;letter-spacing:0.55px;left:250px;">Cold Calls - Spencer</div>
<div class="a" style="left:644.5px;top:632px;width:1px;height:56px;background:#e3e3e3;"></div>
<div class="a" style="left:754px;top:632px;width:1px;height:56px;background:#e3e3e3;"></div>
<div class="a" style="left:857px;top:632px;width:1px;height:56px;background:#e3e3e3;"></div>
<div class="a" style="left:951px;top:632px;width:1px;height:56px;background:#e3e3e3;"></div>
<div class="a" style="left:1045px;top:632px;width:1px;height:56px;background:#e3e3e3;"></div>
<div class="a" style="left:1139px;top:632px;width:1px;height:56px;background:#e3e3e3;"></div>
<div class="a" style="left:1233px;top:632px;width:1px;height:56px;background:#e3e3e3;"></div>
<div class="a" style="left:1327px;top:632px;width:1px;height:56px;background:#e3e3e3;"></div>
<div class="a" style="left:1421px;top:632px;width:1px;height:56px;background:#e3e3e3;"></div>
<div class="t" style="top:650.17px;font-size:20px;color:#1e1e1e;letter-spacing:0.55px;left:39px;width:600px;text-align:right;"><span style="color:#707070;letter-spacing:0.1px">&gt;=</span> 50</div>
<div class="t" style="top:650.17px;font-size:20px;color:#45a04a;letter-spacing:0.55px;left:149.79999999999995px;width:600px;text-align:right;">50.62</div>
<div class="t" style="top:650.17px;font-size:20px;color:#1e1e1e;letter-spacing:0.55px;left:253px;width:600px;text-align:right;">658</div>
<div class="t" style="top:650.17px;font-size:20px;color:#e9473a;letter-spacing:0.55px;left:346.20000000000005px;width:600px;text-align:right;">47</div>
<div class="t" style="top:650.17px;font-size:20px;color:#45a04a;letter-spacing:0.55px;left:440.20000000000005px;width:600px;text-align:right;">54</div>
<svg class="i" style="left:953.60px;top:627.60px" width="21.6" height="21.6" viewBox="0 0 24 24"><path fill="#9e9e9e" d="M19.88 18.47c.44-.7.7-1.51.7-2.39 0-2.49-2.01-4.5-4.5-4.5s-4.5 2.01-4.5 4.5 2.01 4.5 4.49 4.5c.88 0 1.7-.26 2.39-.7L21.58 23 23 21.58l-3.12-3.11zm-3.8.11c-1.38 0-2.5-1.12-2.5-2.5s1.12-2.5 2.5-2.5 2.5 1.12 2.5 2.5-1.12 2.5-2.5 2.5zm-.36-8.5c-.74.02-1.450.18-2.1.45l-.55-.83-3.8 6.18-3.01-3.52-3.63 5.81L1 17l5-8 3 3.5L13 6l2.72 4.080zm2.59.5c-.64-.28-1.33-.45-2.05-.49L21.38 2 23 3.18l-4.69 7.4z"/></svg>
<div class="t" style="top:650.17px;font-size:20px;color:#45a04a;letter-spacing:0.55px;left:534.2px;width:600px;text-align:right;">54</div>
<div class="t" style="top:650.17px;font-size:20px;color:#45a04a;letter-spacing:0.55px;left:628.2px;width:600px;text-align:right;">77</div>
<div class="t" style="top:650.17px;font-size:20px;color:#45a04a;letter-spacing:0.55px;left:722.2px;width:600px;text-align:right;">54</div>
<div class="t" style="top:650.17px;font-size:20px;color:#45a04a;letter-spacing:0.55px;left:816.2px;width:600px;text-align:right;">66</div>
<div class="a" style="left:86px;top:695px;width:1372px;height:1px;background:#e2e2e2;"></div>
<div class="a" style="left:136px;top:703px;width:6px;height:57px;background:#ef4437;border-radius:1px"></div>
<svg class="i" style="left:161px;top:707px;border-radius:4px" width="50" height="49" viewBox="0 0 50 49"><clipPath id="c161707"><rect width="50" height="49" rx="3.5"/></clipPath><g clip-path="url(#c161707)"><rect width="50" height="49" fill="#3e3735"/><rect x="30" width="20" height="13" fill="#a46b52"/><path d="M12 49 C8 32 12 6 28 5 C42 5 46 28 44 49Z" fill="#2a2220"/><ellipse cx="29" cy="25" rx="9.5" ry="12.5" fill="#d8b0a2"/><path d="M20 49 C23 42 35 42 38 49Z" fill="#b47e66"/></g></svg>
<div class="t" style="top:721.25px;font-size:20.5px;color:#1e1e1e;letter-spacing:0.55px;left:250px;">Profit</div>
<div class="a" style="left:644.5px;top:703px;width:1px;height:57px;background:#e3e3e3;"></div>
<div class="a" style="left:754px;top:703px;width:1px;height:57px;background:#e3e3e3;"></div>
<div class="a" style="left:857px;top:703px;width:1px;height:57px;background:#e3e3e3;"></div>
<div class="a" style="left:951px;top:703px;width:1px;height:57px;background:#e3e3e3;"></div>
<div class="a" style="left:1045px;top:703px;width:1px;height:57px;background:#e3e3e3;"></div>
<div class="a" style="left:1139px;top:703px;width:1px;height:57px;background:#e3e3e3;"></div>
<div class="a" style="left:1233px;top:703px;width:1px;height:57px;background:#e3e3e3;"></div>
<div class="a" style="left:1327px;top:703px;width:1px;height:57px;background:#e3e3e3;"></div>
<div class="a" style="left:1421px;top:703px;width:1px;height:57px;background:#e3e3e3;"></div>
<div class="t" style="top:706.07px;font-size:20px;color:#707070;letter-spacing:0.1px;left:39px;width:600px;text-align:right;">&gt;=</div>
<div class="t" style="top:735.37px;font-size:20px;color:#1e1e1e;letter-spacing:0.55px;left:39px;width:600px;text-align:right;">$35,000</div>
<div class="t" style="top:721.67px;font-size:20px;color:#45a04a;letter-spacing:0.55px;left:149.79999999999995px;width:600px;text-align:right;">$4<span style="clip-path:inset(0 3.0px 0 2.5px);margin-left:-2.5px;margin-right:-3.0px">1</span>,969.38</div>
<div class="t" style="top:721.67px;font-size:20px;color:#1e1e1e;letter-spacing:0.55px;left:253px;width:600px;text-align:right;">$545,602</div>
<div class="t" style="top:721.67px;font-size:20px;color:#e9473a;letter-spacing:0.55px;left:346.20000000000005px;width:600px;text-align:right;">$33,000</div>
<svg class="i" style="left:859.60px;top:698.60px" width="21.6" height="21.6" viewBox="0 0 24 24"><path fill="#9e9e9e" d="M19.88 18.47c.44-.7.7-1.51.7-2.39 0-2.49-2.01-4.5-4.5-4.5s-4.5 2.01-4.5 4.5 2.01 4.5 4.49 4.5c.88 0 1.7-.26 2.39-.7L21.58 23 23 21.58l-3.12-3.11zm-3.8.11c-1.38 0-2.5-1.12-2.5-2.5s1.12-2.5 2.5-2.5 2.5 1.12 2.5 2.5-1.12 2.5-2.5 2.5zm-.36-8.5c-.74.02-1.450.18-2.1.45l-.55-.83-3.8 6.18-3.01-3.52-3.63 5.81L1 17l5-8 3 3.5L13 6l2.72 4.080zm2.59.5c-.64-.28-1.33-.45-2.05-.49L21.38 2 23 3.18l-4.69 7.4z"/></svg>
<div class="t" style="top:721.67px;font-size:20px;color:#e9473a;letter-spacing:0.55px;left:440.20000000000005px;width:600px;text-align:right;">$34,687</div>
<div class="t" style="top:721.67px;font-size:20px;color:#e9473a;letter-spacing:0.55px;left:534.2px;width:600px;text-align:right;">$33,465</div>
<div class="t" style="top:721.67px;font-size:20px;color:#e9473a;letter-spacing:0.55px;left:628.2px;width:600px;text-align:right;">$26,356</div>
<div class="t" style="top:721.67px;font-size:20px;color:#45a04a;letter-spacing:0.55px;left:722.2px;width:600px;text-align:right;">$68,436</div>
<div class="t" style="top:721.67px;font-size:20px;color:#45a04a;letter-spacing:0.55px;left:816.2px;width:600px;text-align:right;">$43,634</div>
<div class="t" style="top:721.67px;font-size:20px;color:#45a04a;letter-spacing:0.55px;left:910.2px;width:600px;text-align:right;">$45,<span style="clip-path:inset(0 3.0px 0 2.5px);margin-left:-2.5px;margin-right:-3.0px">1</span>20</div>
<div class="a" style="left:86px;top:767px;width:1372px;height:1px;background:#e2e2e2;"></div>
<div class="a" style="left:136px;top:775px;width:6px;height:56px;background:#fdd835;border-radius:1px"></div>
<svg class="i" style="left:161px;top:779px;border-radius:4px" width="50" height="49" viewBox="0 0 50 49"><clipPath id="c161779"><rect width="50" height="49" rx="3.5"/></clipPath><g clip-path="url(#c161779)"><rect width="50" height="49" fill="#8e8e8e"/><rect y="32" width="50" height="17" fill="#a2a2a2"/><path d="M19 9 C23 5 29 7 29 13 L33 25 L31 38 L35 44 L16 44 L21 35 L15 25Z" fill="#232323"/><ellipse cx="24" cy="11" rx="4" ry="4.5" fill="#5e4c44"/></g></svg>
<div class="t" style="top:792.75px;font-size:20.5px;color:#1e1e1e;letter-spacing:0.55px;left:250px;">Conversion Rate</div>
<div class="a" style="left:644.5px;top:775px;width:1px;height:56px;background:#e3e3e3;"></div>
<div class="a" style="left:754px;top:775px;width:1px;height:56px;background:#e3e3e3;"></div>
<div class="a" style="left:857px;top:775px;width:1px;height:56px;background:#e3e3e3;"></div>
<div class="a" style="left:951px;top:775px;width:1px;height:56px;background:#e3e3e3;"></div>
<div class="a" style="left:1045px;top:775px;width:1px;height:56px;background:#e3e3e3;"></div>
<div class="a" style="left:1139px;top:775px;width:1px;height:56px;background:#e3e3e3;"></div>
<div class="a" style="left:1233px;top:775px;width:1px;height:56px;background:#e3e3e3;"></div>
<div class="a" style="left:1327px;top:775px;width:1px;height:56px;background:#e3e3e3;"></div>
<div class="a" style="left:1421px;top:775px;width:1px;height:56px;background:#e3e3e3;"></div>
<div class="t" style="top:793.17px;font-size:20px;color:#1e1e1e;letter-spacing:0.55px;left:39px;width:600px;text-align:right;"><span style="color:#707070;letter-spacing:0.1px">&gt;=</span> 25 <span style="margin-left:-1.2px;margin-right:-1.2px">%</span></div>
<div class="t" style="top:793.17px;font-size:20px;color:#e9473a;letter-spacing:0.55px;left:149.79999999999995px;width:600px;text-align:right;">23.3<span style="clip-path:inset(0 3.0px 0 2.5px);margin-left:-2.5px;margin-right:-3.0px">1</span><span style="margin-left:-1.2px;margin-right:-1.2px">%</span></div>
<div class="t" style="top:793.30px;font-size:15px;color:#1e1e1e;letter-spacing:0.55px;left:253px;width:600px;text-align:right;">&ndash;</div>
<div class="t" style="top:793.17px;font-size:20px;color:#45a04a;letter-spacing:0.55px;left:346.20000000000005px;width:600px;text-align:right;">25<span style="margin-left:-1.2px;margin-right:-1.2px">%</span></div>
<div class="t" style="top:793.17px;font-size:20px;color:#e9473a;letter-spacing:0.55px;left:440.20000000000005px;width:600px;text-align:right;">24<span style="margin-left:-1.2px;margin-right:-1.2px">%</span></div>
<div class="t" style="top:793.17px;font-size:20px;color:#45a04a;letter-spacing:0.55px;left:534.2px;width:600px;text-align:right;">26<span style="margin-left:-1.2px;margin-right:-1.2px">%</span></div>
<div class="t" style="top:793.17px;font-size:20px;color:#e9473a;letter-spacing:0.55px;left:628.2px;width:600px;text-align:right;">22<span style="margin-left:-1.2px;margin-right:-1.2px">%</span></div>
<div class="t" style="top:793.17px;font-size:20px;color:#e9473a;letter-spacing:0.55px;left:722.2px;width:600px;text-align:right;">24<span style="margin-left:-1.2px;margin-right:-1.2px">%</span></div>
<div class="t" style="top:793.17px;font-size:20px;color:#e9473a;letter-spacing:0.55px;left:816.2px;width:600px;text-align:right;">23<span style="margin-left:-1.2px;margin-right:-1.2px">%</span></div>
<div class="a" style="left:86px;top:838px;width:1372px;height:7px;background:#2e8aad;"></div>
<div class="a" style="left:136px;top:852px;width:6px;height:57px;background:#4caa50;border-radius:1px"></div>
<svg class="i" style="left:161px;top:856px;border-radius:4px" width="50" height="49" viewBox="0 0 50 49"><clipPath id="c161856"><rect width="50" height="49" rx="3.5"/></clipPath><g clip-path="url(#c161856)"><rect width="50" height="49" fill="#a9a9a9"/><path d="M0 11 L10 12 L16 22 L17 49 L0 49Z" fill="#1d1d1d"/><path d="M0 11 C5 11 10 14 12 19 L9 24 L0 23Z" fill="#b8432e"/><path d="M35 0 L50 0 L50 49 L38 49 C44 30 44 14 35 0Z" fill="#3a8db0"/><path d="M50 30 L50 49 L40 49 L42 32Z" fill="#8d9ea6"/><path d="M38 14 C46 18 48 28 41 36" stroke="#1e1e1e" stroke-width="2.4" fill="none"/><ellipse cx="24.5" cy="22" rx="11.5" ry="14" fill="#2a2424"/><ellipse cx="24.5" cy="22.5" rx="10.5" ry="13.2" fill="#c38d7b"/><ellipse cx="27" cy="14" rx="5" ry="4.5" fill="#d8ab9c"/><path d="M14.5 24 C14 34 19 40 24.5 40 C31 40 35 34 34.5 24 C32 29 28 28.5 24.5 28.5 C21 28.5 17 29 14.5 24Z" fill="#252020"/><path d="M19 38 C20 44 29 44 30 38 L30 44 L19 44Z" fill="#b47f6c"/><path d="M0 49 L0 42 C10 40 16 41 20 43 L29 43 C36 40 40 41 44 44 L46 49Z" fill="#222"/></g></svg>
<div class="t" style="top:870.25px;font-size:20.5px;color:#1e1e1e;letter-spacing:0.55px;left:250px;">Reported Hours</div>
<div class="a" style="left:644.5px;top:852px;width:1px;height:57px;background:#e3e3e3;"></div>
<div class="a" style="left:754px;top:852px;width:1px;height:57px;background:#e3e3e3;"></div>
<div class="a" style="left:857px;top:852px;width:1px;height:57px;background:#e3e3e3;"></div>
<div class="a" style="left:951px;top:852px;width:1px;height:57px;background:#e3e3e3;"></div>
<div class="a" style="left:1045px;top:852px;width:1px;height:57px;background:#e3e3e3;"></div>
<div class="a" style="left:1139px;top:852px;width:1px;height:57px;background:#e3e3e3;"></div>
<div class="a" style="left:1233px;top:852px;width:1px;height:57px;background:#e3e3e3;"></div>
<div class="a" style="left:1327px;top:852px;width:1px;height:57px;background:#e3e3e3;"></div>
<div class="a" style="left:1421px;top:852px;width:1px;height:57px;background:#e3e3e3;"></div>
<div class="t" style="top:870.67px;font-size:20px;color:#1e1e1e;letter-spacing:0.55px;left:39px;width:600px;text-align:right;"><span style="color:#707070;letter-spacing:0.1px">&lt;=</span> <span style="clip-path:inset(0 3.0px 0 2.5px);margin-left:-2.5px;margin-right:-3.0px">1</span>25</div>
<div class="t" style="top:870.67px;font-size:20px;color:#45a04a;letter-spacing:0.55px;left:149.79999999999995px;width:600px;text-align:right;">67.3<span style="clip-path:inset(0 3.0px 0 2.5px);margin-left:-2.5px;margin-right:-3.0px">1</span></div>
<div class="t" style="top:870.67px;font-size:20px;color:#1e1e1e;letter-spacing:0.55px;left:253px;width:600px;text-align:right;">875</div>
<div class="t" style="top:870.67px;font-size:20px;color:#45a04a;letter-spacing:0.55px;left:346.20000000000005px;width:600px;text-align:right;">78</div>
<div class="t" style="top:870.67px;font-size:20px;color:#45a04a;letter-spacing:0.55px;left:440.20000000000005px;width:600px;text-align:right;">54</div>
<div class="t" style="top:870.67px;font-size:20px;color:#45a04a;letter-spacing:0.55px;left:534.2px;width:600px;text-align:right;">47</div>
<div class="t" style="top:870.67px;font-size:20px;color:#45a04a;letter-spacing:0.55px;left:628.2px;width:600px;text-align:right;">36</div>
<div class="t" style="top:870.67px;font-size:20px;color:#45a04a;letter-spacing:0.55px;left:722.2px;width:600px;text-align:right;">23</div>
<div class="t" style="top:870.67px;font-size:20px;color:#45a04a;letter-spacing:0.55px;left:816.2px;width:600px;text-align:right;"><span style="clip-path:inset(0 3.0px 0 2.5px);margin-left:-2.5px;margin-right:-3.0px">1</span>7</div>
<div class="a" style="left:86px;top:916px;width:1372px;height:1px;background:#e2e2e2;"></div>
<div class="a" style="left:136px;top:924px;width:6px;height:56px;background:#fdd835;border-radius:1px"></div>
<svg class="i" style="left:161px;top:928px;border-radius:4px" width="50" height="49" viewBox="0 0 50 49"><clipPath id="c161928"><rect width="50" height="49" rx="3.5"/></clipPath><g clip-path="url(#c161928)"><rect width="50" height="49" fill="#a9a9a9"/><path d="M0 11 L10 12 L16 22 L17 49 L0 49Z" fill="#1d1d1d"/><path d="M0 11 C5 11 10 14 12 19 L9 24 L0 23Z" fill="#b8432e"/><path d="M35 0 L50 0 L50 49 L38 49 C44 30 44 14 35 0Z" fill="#3a8db0"/><path d="M50 30 L50 49 L40 49 L42 32Z" fill="#8d9ea6"/><path d="M38 14 C46 18 48 28 41 36" stroke="#1e1e1e" stroke-width="2.4" fill="none"/><ellipse cx="24.5" cy="22" rx="11.5" ry="14" fill="#2a2424"/><ellipse cx="24.5" cy="22.5" rx="10.5" ry="13.2" fill="#c38d7b"/><ellipse cx="27" cy="14" rx="5" ry="4.5" fill="#d8ab9c"/><path d="M14.5 24 C14 34 19 40 24.5 40 C31 40 35 34 34.5 24 C32 29 28 28.5 24.5 28.5 C21 28.5 17 29 14.5 24Z" fill="#252020"/><path d="M19 38 C20 44 29 44 30 38 L30 44 L19 44Z" fill="#b47f6c"/><path d="M0 49 L0 42 C10 40 16 41 20 43 L29 43 C36 40 40 41 44 44 L46 49Z" fill="#222"/></g></svg>
<div class="t" style="top:941.75px;font-size:20.5px;color:#1e1e1e;letter-spacing:0.55px;left:250px;">Search Ranking</div>
<div class="a" style="left:644.5px;top:924px;width:1px;height:56px;background:#e3e3e3;"></div>
<div class="a" style="left:754px;top:924px;width:1px;height:56px;background:#e3e3e3;"></div>
<div class="a" style="left:857px;top:924px;width:1px;height:56px;background:#e3e3e3;"></div>
<div class="a" style="left:951px;top:924px;width:1px;height:56px;background:#e3e3e3;"></div>
<div class="a" style="left:1045px;top:924px;width:1px;height:56px;background:#e3e3e3;"></div>
<div class="a" style="left:1139px;top:924px;width:1px;height:56px;background:#e3e3e3;"></div>
<div class="a" style="left:1233px;top:924px;width:1px;height:56px;background:#e3e3e3;"></div>
<div class="a" style="left:1327px;top:924px;width:1px;height:56px;background:#e3e3e3;"></div>
<div class="a" style="left:1421px;top:924px;width:1px;height:56px;background:#e3e3e3;"></div>
<div class="t" style="top:942.17px;font-size:20px;color:#1e1e1e;letter-spacing:0.55px;left:39px;width:600px;text-align:right;"><span style="color:#707070;letter-spacing:0.1px">&lt;=</span> <span style="clip-path:inset(0 3.0px 0 2.5px);margin-left:-2.5px;margin-right:-3.0px">1</span>0</div>
<div class="t" style="top:942.17px;font-size:20px;color:#e9473a;letter-spacing:0.55px;left:149.79999999999995px;width:600px;text-align:right;"><span style="clip-path:inset(0 3.0px 0 2.5px);margin-left:-2.5px;margin-right:-3.0px">1</span>0.38</div>
<div class="t" style="top:942.30px;font-size:15px;color:#1e1e1e;letter-spacing:0.55px;left:253px;width:600px;text-align:right;">&ndash;</div>
<div class="t" style="top:942.17px;font-size:20px;color:#45a04a;letter-spacing:0.55px;left:346.20000000000005px;width:600px;text-align:right;"><span style="clip-path:inset(0 3.0px 0 2.5px);margin-left:-2.5px;margin-right:-3.0px">1</span>0</div>
<div class="t" style="top:942.17px;font-size:20px;color:#e9473a;letter-spacing:0.55px;left:440.20000000000005px;width:600px;text-align:right;"><span style="clip-path:inset(0 3.0px 0 2.5px);margin-left:-2.5px;margin-right:-3.0px">1</span><span style="clip-path:inset(0 3.0px 0 2.5px);margin-left:-2.5px;margin-right:-3.0px">1</span></div>
<div class="t" style="top:942.17px;font-size:20px;color:#e9473a;letter-spacing:0.55px;left:534.2px;width:600px;text-align:right;"><span style="clip-path:inset(0 3.0px 0 2.5px);margin-left:-2.5px;margin-right:-3.0px">1</span>2</div>
<div class="t" style="top:942.17px;font-size:20px;color:#e9473a;letter-spacing:0.55px;left:628.2px;width:600px;text-align:right;"><span style="clip-path:inset(0 3.0px 0 2.5px);margin-left:-2.5px;margin-right:-3.0px">1</span><span style="clip-path:inset(0 3.0px 0 2.5px);margin-left:-2.5px;margin-right:-3.0px">1</span></div>
<div class="t" style="top:942.17px;font-size:20px;color:#45a04a;letter-spacing:0.55px;left:722.2px;width:600px;text-align:right;"><span style="clip-path:inset(0 3.0px 0 2.5px);margin-left:-2.5px;margin-right:-3.0px">1</span>0</div>
<div class="t" style="top:942.17px;font-size:20px;color:#45a04a;letter-spacing:0.55px;left:816.2px;width:600px;text-align:right;">9</div>
<div class="a" style="left:86px;top:987px;width:1372px;height:1px;background:#e2e2e2;"></div>
<div class="a" style="left:136px;top:995px;width:6px;height:57px;background:#ef4437;border-radius:1px"></div>
<svg class="i" style="left:161px;top:999px;border-radius:4px" width="50" height="49" viewBox="0 0 50 49"><clipPath id="c161999"><rect width="50" height="49" rx="3.5"/></clipPath><g clip-path="url(#c161999)"><rect width="50" height="49" fill="#1c2026"/><rect x="30" y="8" width="14" height="12" fill="#46596a"/><path d="M5 3 L11 2 L17 25 L11 28Z" fill="#dcc4b4"/><ellipse cx="27" cy="24" rx="6.5" ry="7.5" fill="#caa292"/><path d="M9 49 C11 34 19 31 27 31 C36 31 43 35 45 49Z" fill="#a7bfc6"/><path d="M40 28 L46 20 L48 24 L44 32Z" fill="#caa292"/></g></svg>
<div class="t" style="top:1013.25px;font-size:20.5px;color:#1e1e1e;letter-spacing:0.55px;left:250px;">Special Projects Billing</div>
<div class="a" style="left:644.5px;top:995px;width:1px;height:57px;background:#e3e3e3;"></div>
<div class="a" style="left:754px;top:995px;width:1px;height:57px;background:#e3e3e3;"></div>
<div class="a" style="left:857px;top:995px;width:1px;height:57px;background:#e3e3e3;"></div>
<div class="a" style="left:951px;top:995px;width:1px;height:57px;background:#e3e3e3;"></div>
<div class="a" style="left:1045px;top:995px;width:1px;height:57px;background:#e3e3e3;"></div>
<div class="a" style="left:1139px;top:995px;width:1px;height:57px;background:#e3e3e3;"></div>
<div class="a" style="left:1233px;top:995px;width:1px;height:57px;background:#e3e3e3;"></div>
<div class="a" style="left:1327px;top:995px;width:1px;height:57px;background:#e3e3e3;"></div>
<div class="a" style="left:1421px;top:995px;width:1px;height:57px;background:#e3e3e3;"></div>
<div class="t" style="top:998.07px;font-size:20px;color:#707070;letter-spacing:0.1px;left:39px;width:600px;text-align:right;">&gt;=</div>
<div class="t" style="top:1027.37px;font-size:20px;color:#1e1e1e;letter-spacing:0.55px;left:39px;width:600px;text-align:right;">$<span style="clip-path:inset(0 3.0px 0 2.5px);margin-left:-2.5px;margin-right:-3.0px">1</span>,000</div>
<div class="t" style="top:1013.67px;font-size:20px;color:#e9473a;letter-spacing:0.55px;left:149.79999999999995px;width:600px;text-align:right;">$0</div>
<div class="t" style="top:1013.67px;font-size:20px;color:#1e1e1e;letter-spacing:0.55px;left:253px;width:600px;text-align:right;">$0</div>
<div class="a" style="left:86px;top:1059px;width:1372px;height:1px;background:#e2e2e2;"></div>
<div class="a" style="left:136px;top:1067px;width:6px;height:57px;background:#ef4437;border-radius:1px"></div>
<div class="a" style="left:162px;top:1072px;width:47px;height:47px;background:#616161;border-radius:4px"></div>
<svg class="i" style="left:163.20px;top:1072.70px" width="45.60" height="45.60" viewBox="0 0 24 24"><path fill="#ffffff" d="M12 12c2.21 0 4-1.79 4-4s-1.79-4-4-4-4 1.79-4 4 1.79 4 4 4zm0 2c-2.67 0-8 1.34-8 4v2h16v-2c0-2.66-5.33-4-8-4z"/></svg>
<div class="t" style="top:1085.25px;font-size:20.5px;color:#1e1e1e;letter-spacing:0.55px;left:250px;">Total Calls</div>
<div class="a" style="left:644.5px;top:1067px;width:1px;height:57px;background:#e3e3e3;"></div>
<div class="a" style="left:754px;top:1067px;width:1px;height:57px;background:#e3e3e3;"></div>
<div class="a" style="left:857px;top:1067px;width:1px;height:57px;background:#e3e3e3;"></div>
<div class="a" style="left:951px;top:1067px;width:1px;height:57px;background:#e3e3e3;"></div>
<div class="a" style="left:1045px;top:1067px;width:1px;height:57px;background:#e3e3e3;"></div>
<div class="a" style="left:1139px;top:1067px;width:1px;height:57px;background:#e3e3e3;"></div>
<div class="a" style="left:1233px;top:1067px;width:1px;height:57px;background:#e3e3e3;"></div>
<div class="a" style="left:1327px;top:1067px;width:1px;height:57px;background:#e3e3e3;"></div>
<div class="a" style="left:1421px;top:1067px;width:1px;height:57px;background:#e3e3e3;"></div>
<div class="t" style="top:1085.67px;font-size:20px;color:#1e1e1e;letter-spacing:0.55px;left:39px;width:600px;text-align:right;"><span style="color:#707070;letter-spacing:0.1px">&gt;=</span> <span style="clip-path:inset(0 3.0px 0 2.5px);margin-left:-2.5px;margin-right:-3.0px">1</span></div>
<div class="t" style="top:1085.67px;font-size:20px;color:#45a04a;letter-spacing:0.55px;left:149.79999999999995px;width:600px;text-align:right;"><span style="clip-path:inset(0 3.0px 0 2.5px);margin-left:-2.5px;margin-right:-3.0px">1</span>5.25</div>
<div class="t" style="top:1085.67px;font-size:20px;color:#1e1e1e;letter-spacing:0.55px;left:253px;width:600px;text-align:right;"><span style="clip-path:inset(0 3.0px 0 2.5px);margin-left:-2.5px;margin-right:-3.0px">1</span>37.25</div>
<div class="t" style="top:1085.67px;font-size:20px;color:#e9473a;letter-spacing:0.55px;left:346.20000000000005px;width:600px;text-align:right;">N/A</div>
<div class="t" style="top:1085.67px;font-size:20px;color:#e9473a;letter-spacing:0.55px;left:440.20000000000005px;width:600px;text-align:right;">N/A</div>
<div class="t" style="top:1085.67px;font-size:20px;color:#e9473a;letter-spacing:0.55px;left:534.2px;width:600px;text-align:right;">N/A</div>
<div class="t" style="top:1085.67px;font-size:20px;color:#45a04a;letter-spacing:0.55px;left:628.2px;width:600px;text-align:right;"><span style="clip-path:inset(0 3.0px 0 2.5px);margin-left:-2.5px;margin-right:-3.0px">1</span>5.47</div>
<div class="t" style="top:1085.67px;font-size:20px;color:#45a04a;letter-spacing:0.55px;left:722.2px;width:600px;text-align:right;"><span style="clip-path:inset(0 3.0px 0 2.5px);margin-left:-2.5px;margin-right:-3.0px">1</span>5.47</div>
<div class="t" style="top:1085.67px;font-size:20px;color:#45a04a;letter-spacing:0.55px;left:816.2px;width:600px;text-align:right;"><span style="clip-path:inset(0 3.0px 0 2.5px);margin-left:-2.5px;margin-right:-3.0px">1</span>5.48</div>
<div class="a" style="left:86px;top:1131px;width:1372px;height:1px;background:#e2e2e2;"></div>
<div class="a" style="left:136px;top:1139px;width:6px;height:56px;background:#fdd835;border-radius:1px"></div>
<svg class="i" style="left:161px;top:1143px;border-radius:4px" width="50" height="49" viewBox="0 0 50 49"><clipPath id="c1611143"><rect width="50" height="49" rx="3.5"/></clipPath><g clip-path="url(#c1611143)"><rect width="50" height="49" fill="#151515"/><path d="M10 49 C12 38 19 35 26 35 C34 35 41 38 45 49Z" fill="#2d2d2d"/><path d="M20 49 L23 36 L31 36 L33 49Z" fill="#c8cfd3"/><ellipse cx="26" cy="22" rx="8.5" ry="11.5" fill="#d39a88"/><path d="M16 21 C15 8 26 5 34 9 C37 13 36 18 35 21 C31 14 22 14 16 21Z" fill="#2a2420"/></g></svg>
<div class="t" style="top:1156.75px;font-size:20.5px;color:#1e1e1e;letter-spacing:0.55px;left:250px;">Deals</div>
<div class="a" style="left:644.5px;top:1139px;width:1px;height:56px;background:#e3e3e3;"></div>
<div class="a" style="left:754px;top:1139px;width:1px;height:56px;background:#e3e3e3;"></div>
<div class="a" style="left:857px;top:1139px;width:1px;height:56px;background:#e3e3e3;"></div>
<div class="a" style="left:951px;top:1139px;width:1px;height:56px;background:#e3e3e3;"></div>
<div class="a" style="left:1045px;top:1139px;width:1px;height:56px;background:#e3e3e3;"></div>
<div class="a" style="left:1139px;top:1139px;width:1px;height:56px;background:#e3e3e3;"></div>
<div class="a" style="left:1233px;top:1139px;width:1px;height:56px;background:#e3e3e3;"></div>
<div class="a" style="left:1327px;top:1139px;width:1px;height:56px;background:#e3e3e3;"></div>
<div class="a" style="left:1421px;top:1139px;width:1px;height:56px;background:#e3e3e3;"></div>
<div class="t" style="top:1157.17px;font-size:20px;color:#1e1e1e;letter-spacing:0.55px;left:39px;width:600px;text-align:right;"><span style="color:#707070;letter-spacing:0.1px">&gt;=</span> 8</div>
<div class="t" style="top:1157.17px;font-size:20px;color:#e9473a;letter-spacing:0.55px;left:149.79999999999995px;width:600px;text-align:right;">4.33</div>
<div class="t" style="top:1157.17px;font-size:20px;color:#1e1e1e;letter-spacing:0.55px;left:253px;width:600px;text-align:right;">39</div>
<svg class="i" style="left:859.60px;top:1134.60px" width="21.6" height="21.6" viewBox="0 0 24 24"><path fill="#9e9e9e" d="M19.88 18.47c.44-.7.7-1.51.7-2.39 0-2.49-2.01-4.5-4.5-4.5s-4.5 2.01-4.5 4.5 2.01 4.5 4.49 4.5c.88 0 1.7-.26 2.39-.7L21.58 23 23 21.58l-3.12-3.11zm-3.8.11c-1.38 0-2.5-1.12-2.5-2.5s1.12-2.5 2.5-2.5 2.5 1.12 2.5 2.5-1.12 2.5-2.5 2.5zm-.36-8.5c-.74.02-1.450.18-2.1.45l-.55-.83-3.8 6.18-3.01-3.52-3.63 5.81L1 17l5-8 3 3.5L13 6l2.72 4.080zm2.59.5c-.64-.28-1.33-.45-2.05-.49L21.38 2 23 3.18l-4.69 7.4z"/></svg>
<svg class="i" style="left:953.60px;top:1134.60px" width="21.6" height="21.6" viewBox="0 0 24 24"><path fill="#9e9e9e" d="M19.88 18.47c.44-.7.7-1.51.7-2.39 0-2.49-2.01-4.5-4.5-4.5s-4.5 2.01-4.5 4.5 2.01 4.5 4.49 4.5c.88 0 1.7-.26 2.39-.7L21.58 23 23 21.58l-3.12-3.11zm-3.8.11c-1.38 0-2.5-1.12-2.5-2.5s1.12-2.5 2.5-2.5 2.5 1.12 2.5 2.5-1.12 2.5-2.5 2.5zm-.36-8.5c-.74.02-1.450.18-2.1.45l-.55-.83-3.8 6.18-3.01-3.52-3.63 5.81L1 17l5-8 3 3.5L13 6l2.72 4.080zm2.59.5c-.64-.28-1.33-.45-2.05-.49L21.38 2 23 3.18l-4.69 7.4z"/></svg>
<svg class="i" style="left:1047.60px;top:1134.60px" width="21.6" height="21.6" viewBox="0 0 24 24"><path fill="#9e9e9e" d="M19.88 18.47c.44-.7.7-1.51.7-2.39 0-2.49-2.01-4.5-4.5-4.5s-4.5 2.01-4.5 4.5 2.01 4.5 4.49 4.5c.88 0 1.7-.26 2.39-.7L21.58 23 23 21.58l-3.12-3.11zm-3.8.11c-1.38 0-2.5-1.12-2.5-2.5s1.12-2.5 2.5-2.5 2.5 1.12 2.5 2.5-1.12 2.5-2.5 2.5zm-.36-8.5c-.74.02-1.450.18-2.1.45l-.55-.83-3.8 6.18-3.01-3.52-3.63 5.81L1 17l5-8 3 3.5L13 6l2.72 4.080zm2.59.5c-.64-.28-1.33-.45-2.05-.49L21.38 2 23 3.18l-4.69 7.4z"/></svg>
<div class="t" style="top:1157.17px;font-size:20px;color:#45a04a;letter-spacing:0.55px;left:628.2px;width:600px;text-align:right;">8</div>
<div class="t" style="top:1157.17px;font-size:20px;color:#45a04a;letter-spacing:0.55px;left:722.2px;width:600px;text-align:right;">9</div>
<div class="t" style="top:1157.17px;font-size:20px;color:#45a04a;letter-spacing:0.55px;left:816.2px;width:600px;text-align:right;"><span style="clip-path:inset(0 3.0px 0 2.5px);margin-left:-2.5px;margin-right:-3.0px">1</span>0</div>
<div class="a" style="left:86px;top:1202px;width:1372px;height:1px;background:#e2e2e2;"></div>
</div></div>
<div class="a" style="left:1458px;top:340px;width:21px;height:859px;background:#fafafa;border-left:1px solid #efefef"></div>
<div class="a" style="left:1464px;top:345px;width:11px;height:715px;background:#c1c1c1;border-radius:5.5px"></div>
<div class="a" style="left:86px;top:1199px;width:1372px;height:20px;background:#fafafa;"></div>
<div class="a" style="left:86px;top:1198.5px;width:1372px;height:1px;background:#e4e4e4;"></div>
<div class="a" style="left:90px;top:1203.5px;width:937px;height:11px;background:#c1c1c1;border-radius:5.5px"></div>
<div class="a" style="left:86px;top:1219px;width:1393px;height:1px;background:#e6e6e6;"></div>
<div class="t" style="top:1250.76px;font-size:18px;color:#707070;letter-spacing:0.55px;left:844.4px;">Items per page:</div>
<div class="t" style="top:1249.92px;font-size:19px;color:#1e1e1e;letter-spacing:0.3px;left:988px;">50</div>
<svg class="i" style="left:1047px;top:1255px" width="14" height="8" viewBox="0 0 14 8"><path d="M0.6 0.6 H13 L6.8 6.8 Z" fill="#6e6e6e"/></svg>
<div class="a" style="left:988px;top:1276.5px;width:78px;height:1.5px;background:#1e1e1e;"></div>
<div class="t" style="top:1251.19px;font-size:17.5px;color:#707070;letter-spacing:0.45px;left:1116px;"><span style="clip-path:inset(0 2.6px 0 2.2px);margin-left:-2.2px;margin-right:-2.6px">1</span> &ndash; <span style="clip-path:inset(0 2.6px 0 2.2px);margin-left:-2.2px;margin-right:-2.6px">1</span>3 of <span style="clip-path:inset(0 2.6px 0 2.2px);margin-left:-2.2px;margin-right:-2.6px">1</span>3</div>
<svg class="i" style="left:1254.60px;top:1243.10px" width="34.80" height="34.80" viewBox="0 0 24 24"><path fill="#bdbdbd" d="M18.41 16.59L13.82 12l4.59-4.59L17 6l-6 6 6 6zM6 6h2v12H6z"/></svg>
<svg class="i" style="left:1311.10px;top:1243.10px" width="34.80" height="34.80" viewBox="0 0 24 24"><path fill="#bdbdbd" d="M15.41 7.41L14 6l-6 6 6 6 1.41-1.41L10.83 12z"/></svg>
<svg class="i" style="left:1367.60px;top:1243.10px" width="34.80" height="34.80" viewBox="0 0 24 24"><path fill="#bdbdbd" d="M10 6L8.59 7.41 13.17 12l-4.58 4.59L10 18l6-6z"/></svg>
<svg class="i" style="left:1422.60px;top:1243.10px" width="34.80" height="34.80" viewBox="0 0 24 24"><path fill="#bdbdbd" d="M5.59 7.41L10.18 12l-4.59 4.59L7 18l6-6-6-6zM16 6h2v12h-2z"/></svg>
<div class="a" style="left:1493px;top:141px;width:520px;height:1270px;background:#fff;border-radius:5px;box-shadow:0 1px 3px rgba(0,0,0,.2),0 1px 1px rgba(0,0,0,.1)"></div>
<div class="a" style="left:1493px;top:230.5px;width:507px;height:1.5px;background:#e0e0e0;"></div>
<div class="a" style="left:1615.5px;top:155px;width:1px;height:62px;background:#e0e0e0;"></div>
<svg class="i" style="left:1540px;top:160px" width="220" height="50" viewBox="1540 160 220 50"><g fill="none" stroke="#1a1a1a" stroke-width="2.5" stroke-linejoin="round"><path d="M1562.5 179.5 L1569.8 186.6 L1562.5 193.8"/><path d="M1656.5 178.6 H1671.8 L1678.6 186.6 L1671.8 194.6 H1656.5 Q1654.6 194.6 1654.6 192.7 V180.5 Q1654.6 178.6 1656.5 178.6 Z"/></g><g fill="#1a1a1a"><circle cx="1660.2" cy="186.6" r="1.35"/><circle cx="1664.6" cy="186.6" r="1.35"/><circle cx="1669" cy="186.6" r="1.35"/></g></svg>
<svg class="i" style="left:1706.1px;top:170.8px" width="32.64" height="32.64" viewBox="0 0 24 24"><path fill="#1a1a1a" d="M19.88 18.47c.44-.7.7-1.51.7-2.39 0-2.49-2.01-4.5-4.5-4.5s-4.5 2.01-4.5 4.5 2.01 4.5 4.49 4.5c.88 0 1.7-.26 2.39-.7L21.58 23 23 21.58l-3.12-3.11zm-3.8.11c-1.38 0-2.5-1.12-2.5-2.5s1.12-2.5 2.5-2.5 2.5 1.12 2.5 2.5-1.12 2.5-2.5 2.5zm-.36-8.5c-.74.02-1.450.18-2.1.45l-.55-.83-3.8 6.18-3.01-3.52-3.63 5.81L1 17l5-8 3 3.5L13 6l2.72 4.080zm2.59.5c-.64-.28-1.33-.45-2.05-.49L21.38 2 23 3.18l-4.69 7.4z"/></svg>
<div class="t" style="top:256.49px;font-size:19.5px;color:#ee5b45;letter-spacing:2.3px;left:1516px;-webkit-text-stroke:0.95px #ee5b45;">KPI Information</div>
<div class="t" style="top:305.88px;font-size:15.5px;color:#777777;letter-spacing:0.4px;left:1516px;">Title *</div>
<div class="t" style="top:331.22px;font-size:21px;color:#1e1e1e;letter-spacing:0.15px;left:1516px;">Revenue</div>
<div class="a" style="left:1516px;top:359px;width:484px;height:2px;background:#2a2a2a;"></div>
<div class="a" style="left:1516px;top:387.5px;width:520px;height:273px;border:1.5px solid #cfcfcf;border-radius:11px"></div>
<div class="a" style="left:1530px;top:455.5px;width:470px;height:1px;background:#e3e3e3;"></div>
<div class="t" style="top:409.29px;font-size:26px;color:#2a2a2a;left:1548.5px;-webkit-text-stroke:1.1px #2a2a2a;">B</div>
<div class="t" style="top:409.29px;font-size:26px;color:#2a2a2a;font-style:italic;left:1615.5px;-webkit-text-stroke:1px #2a2a2a;">i</div>
<div class="t" style="top:409.29px;font-size:26px;color:#2a2a2a;left:1665.5px;-webkit-text-stroke:0.9px #2a2a2a;">U</div>
<div class="a" style="left:1666px;top:433.3px;width:19px;height:2.6px;background:#2a2a2a;"></div>
<div class="t" style="top:409.29px;font-size:26px;color:#2a2a2a;left:1722.5px;-webkit-text-stroke:0.9px #2a2a2a;">A</div>
<svg class="i" style="left:1738px;top:410px" width="12" height="25" viewBox="0 0 12 25"><g fill="#2a2a2a"><circle cx="6.5" cy="6.8" r="2"/><circle cx="6.5" cy="13.5" r="2"/><circle cx="6.5" cy="20" r="2"/></g></svg>
<div class="a" style="left:1803px;top:413px;width:26px;height:3px;background:#2e2e2e;"></div>
<div class="a" style="left:1803px;top:420px;width:17px;height:3px;background:#2e2e2e;"></div>
<div class="a" style="left:1803px;top:427px;width:8px;height:3px;background:#2e2e2e;"></div>
<div class="a" style="left:1862px;top:413px;width:26px;height:3px;background:#2e2e2e;"></div>
<div class="a" style="left:1868px;top:420px;width:14px;height:3px;background:#2e2e2e;"></div>
<div class="a" style="left:1871px;top:427px;width:8px;height:3px;background:#2e2e2e;"></div>
<div class="a" style="left:1920.8px;top:412.6px;width:4.4px;height:4.4px;border-radius:50%;background:#2a2a2a"></div>
<div class="a" style="left:1929.5px;top:413px;width:17.7px;height:3px;background:#2e2e2e;"></div>
<div class="a" style="left:1920.8px;top:419.8px;width:4.4px;height:4.4px;border-radius:50%;background:#2a2a2a"></div>
<div class="a" style="left:1929.5px;top:420px;width:17.7px;height:3px;background:#2e2e2e;"></div>
<div class="a" style="left:1920.8px;top:427.0px;width:4.4px;height:4.4px;border-radius:50%;background:#2a2a2a"></div>
<div class="a" style="left:1929.5px;top:427px;width:17.7px;height:3px;background:#2e2e2e;"></div>
<svg class="i" style="left:1964.5px;top:418.5px" width="12" height="7" viewBox="0 0 12 7"><path d="M0.5 0.5 H11.5 L6 6.2 Z" fill="#2a2a2a"/></svg>
<div class="a" style="left:1998px;top:412px;width:2px;height:20px;background:#555;"></div>
<div class="t" style="top:509.72px;font-size:21px;color:#3a3a3a;letter-spacing:0.55px;left:1545px;">Total net new revenue for the week driven by individual sales. This person</div>
<div class="t" style="top:540.72px;font-size:21px;color:#3a3a3a;letter-spacing:0.55px;left:1545px;">is responsible for driving and tracking this number to ensure company</div>
<div class="t" style="top:571.72px;font-size:21px;color:#3a3a3a;letter-spacing:0.55px;left:1545px;">fiscal health.</div>
<div class="a" style="left:1516px;top:710.5px;width:48px;height:19px;background:#9cc6d6;border-radius:9.5px"></div>
<div class="a" style="left:1538px;top:706px;width:28px;height:28px;border-radius:50%;background:#2e8aad;box-shadow:0 1px 3px rgba(0,0,0,.3)"></div>
<div class="t" style="top:710.15px;font-size:20.5px;color:#1e1e1e;letter-spacing:1.6px;left:1578px;-webkit-text-stroke:0.55px #1e1e1e;">Smart KPI</div>
<div class="a" style="left:1725.5px;top:710.5px;width:48px;height:19px;background:#9cc6d6;border-radius:9.5px"></div>
<div class="a" style="left:1747.5px;top:706px;width:28px;height:28px;border-radius:50%;background:#2e8aad;box-shadow:0 1px 3px rgba(0,0,0,.3)"></div>
<div class="t" style="top:710.15px;font-size:20.5px;color:#1e1e1e;letter-spacing:0.6px;left:1787px;">Manual Score Override</div>
<div class="t" style="top:763.47px;font-size:20px;color:#2a2a2a;letter-spacing:0.55px;font-style:italic;left:1516.5px;">Smart KPIs allow you to auto-fill scores for this KPI using</div>
<div class="t" style="top:792.77px;font-size:20px;color:#2a2a2a;letter-spacing:0.55px;font-style:italic;left:1516.5px;">a formula.</div>
<div class="a" style="left:1520px;top:850.5px;width:117.5px;height:50px;background:#2e8aad;border-radius:5px;box-shadow:0 2px 3px rgba(0,0,0,.25)"></div>
<div class="t" style="top:866.07px;font-size:20px;color:#ffffff;letter-spacing:0.05px;left:1542.5px;">Add KPI</div>
<div class="a" style="left:1646px;top:850.5px;width:169.5px;height:50px;background:#2e8aad;border-radius:5px;box-shadow:0 2px 3px rgba(0,0,0,.25)"></div>
<div class="t" style="top:866.07px;font-size:20px;color:#ffffff;letter-spacing:1.1px;left:1669.5px;">Add Number</div>
<div class="a" style="left:1987px;top:850.5px;width:60px;height:50px;background:#fff;border-radius:5px;box-shadow:0 1px 3px rgba(0,0,0,.25)"></div>
<div class="a" style="left:1520px;top:923.5px;width:90px;height:50.5px;background:#fff;border-radius:5px;box-shadow:0 1px 3px rgba(0,0,0,.25)"></div>
<svg class="i" style="left:1548.44px;top:933.94px" width="33.12" height="33.12" viewBox="0 0 24 24"><path fill="#222222" d="M22 3H7c-.69 0-1.23.35-1.59.88L0 12l5.41 8.11c.36.53.9.89 1.59.89h15c1.1 0 2-.9 2-2V5c0-1.1-.9-2-2-2zm-3 12.59L17.59 17 14 13.41 10.41 17 9 15.59 12.59 12 9 8.41 10.41 7 14 10.59 17.59 7 19 8.41 15.41 12 19 15.59z"/></svg>
<div class="a" style="left:1618px;top:923.5px;width:90px;height:50.5px;background:#fff;border-radius:5px;box-shadow:0 1px 3px rgba(0,0,0,.25)"></div>
<svg class="i" style="left:1646.68px;top:934.38px" width="32.64" height="32.64" viewBox="0 0 24 24"><path fill="#222222" d="M19 6.41L17.59 5 12 10.59 6.41 5 5 6.41 10.59 12 5 17.59 6.41 19 12 13.41 17.59 19 19 17.59 13.41 12z"/></svg>
<div class="a" style="left:1516px;top:1006px;width:520px;height:44.5px;background:#fff;border-radius:5px;box-shadow:0 1px 3px rgba(0,0,0,.22)"></div>
<div class="t" style="top:1092.38px;font-size:15.5px;color:#777777;letter-spacing:0.4px;left:1516px;">Unit</div>
<div class="t" style="top:1117.72px;font-size:21px;color:#1e1e1e;letter-spacing:0.6px;left:1516px;">Currency</div>
<svg class="i" style="left:1636px;top:1124px" width="15" height="8" viewBox="0 0 15 8"><path d="M0.8 0.8 H13.8 L7.3 7.3 Z" fill="#757575"/></svg>
<div class="a" style="left:1516px;top:1147.5px;width:140px;height:1.5px;background:#1e1e1e;"></div>
<div class="t" style="top:1092.38px;font-size:15.5px;color:#777777;letter-spacing:0.5px;left:1670.5px;">Currency</div>
<div class="t" style="top:1117.72px;font-size:21px;color:#1e1e1e;left:1670.5px;">$</div>
<svg class="i" style="left:1791px;top:1124px" width="15" height="8" viewBox="0 0 15 8"><path d="M0.8 0.8 H13.8 L7.3 7.3 Z" fill="#757575"/></svg>
<div class="a" style="left:1670.5px;top:1147.5px;width:139.5px;height:1.5px;background:#1e1e1e;"></div>
<div class="t" style="top:1092.38px;font-size:15.5px;color:#777777;letter-spacing:0.5px;left:1824.5px;">Goal *</div>
<div class="t" style="top:1120.22px;font-size:21px;color:#1e1e1e;letter-spacing:-0.5px;left:1824.5px;">100000</div>
<div class="a" style="left:1824.5px;top:1153.5px;width:176px;height:1.5px;background:#1e1e1e;"></div>
<div class="t" style="top:1178.88px;font-size:15.5px;color:#777777;letter-spacing:0.35px;left:1516px;">Goal Orientation Rule</div>
<div class="t" style="top:1204.72px;font-size:21px;color:#1e1e1e;letter-spacing:0.55px;left:1516px;">Greater than or equal to Goal</div>
<svg class="i" style="left:1918px;top:1211px" width="15" height="8" viewBox="0 0 15 8"><path d="M0.8 0.8 H13.8 L7.3 7.3 Z" fill="#757575"/></svg>
<div class="a" style="left:1516px;top:1234.5px;width:422px;height:1.5px;background:#1e1e1e;"></div>
<div class="t" style="top:1204.72px;font-size:21px;color:#8a8a8a;letter-spacing:0.5px;left:1952.5px;">T4W</div>
<div class="a" style="left:1952px;top:1234.5px;width:48px;height:1.5px;background:#1e1e1e;"></div>
<div class="t" style="top:1259.88px;font-size:15.5px;color:#777777;letter-spacing:-0.3px;left:1516px;">KPI Owner</div>
<div class="t" style="top:1284.72px;font-size:21px;color:#1e1e1e;letter-spacing:0.6px;left:1516px;">Jeff Jacobs</div>
<svg class="i" style="left:1918px;top:1291.5px" width="15" height="8" viewBox="0 0 15 8"><path d="M0.8 0.8 H13.8 L7.3 7.3 Z" fill="#757575"/></svg>
<div class="a" style="left:1516px;top:1315px;width:422px;height:1.5px;background:#1e1e1e;"></div>
<div class="t" style="top:1259.88px;font-size:15.5px;color:#777777;letter-spacing:0.5px;left:1952.5px;">Seat</div>
<div class="t" style="top:1284.72px;font-size:21px;color:#1e1e1e;letter-spacing:0.6px;left:1952.5px;">Sales</div>
<div class="a" style="left:1952px;top:1315px;width:48px;height:1.5px;background:#1e1e1e;"></div>
<div class="a" style="left:1530.5px;top:1349px;width:36px;height:18.5px;background:#9c9c9c;border-radius:9.25px"></div>
<div class="a" style="left:1515.5px;top:1344px;width:28px;height:28px;border-radius:50%;background:#fafafa;box-shadow:0 1px 3px rgba(0,0,0,.35)"></div>
<div class="t" style="top:1347.72px;font-size:21px;color:#1e1e1e;letter-spacing:0.7px;left:1578px;">Hide Average</div>
<div class="a" style="left:1738px;top:1349px;width:36px;height:18.5px;background:#9c9c9c;border-radius:9.25px"></div>
<div class="a" style="left:1723px;top:1344px;width:28px;height:28px;border-radius:50%;background:#fafafa;box-shadow:0 1px 3px rgba(0,0,0,.35)"></div>
<div class="t" style="top:1347.72px;font-size:21px;color:#1e1e1e;letter-spacing:0.7px;left:1785.75px;">Hide Total</div>
</body></html>
